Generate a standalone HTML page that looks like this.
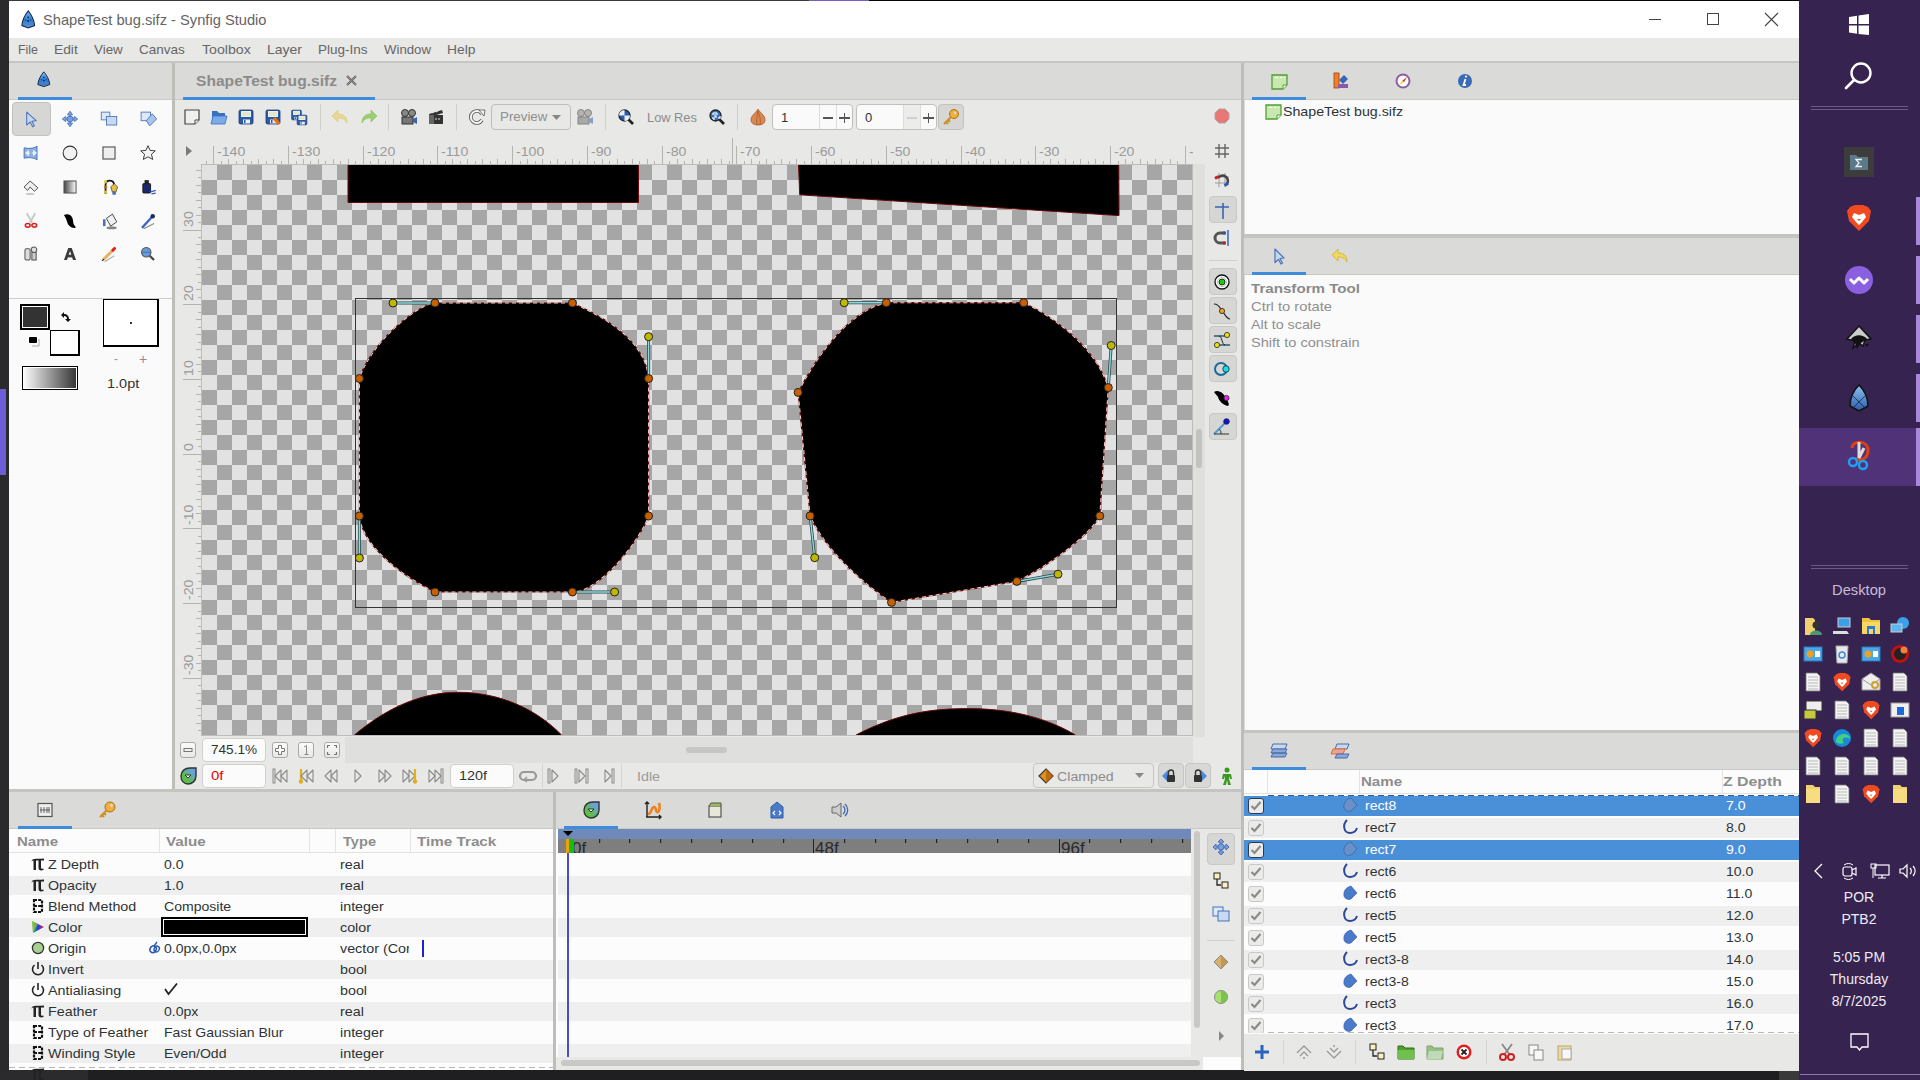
<!DOCTYPE html>
<html><head><meta charset="utf-8">
<style>
*{margin:0;padding:0;box-sizing:border-box}
html,body{width:1920px;height:1080px;overflow:hidden;background:#2a2a2c;font-family:"Liberation Sans",sans-serif;font-size:13px;color:#2e3436}
.a{position:absolute}
.t{position:absolute;white-space:nowrap;line-height:1}
svg{position:absolute;overflow:visible}
</style></head><body>
<div class="a" style="left:9px;top:0px;width:800px;height:1px;background:#3a3a3a;"></div>
<div class="a" style="left:869px;top:0px;width:931px;height:1px;background:#050505;"></div>
<div class="a" style="left:809px;top:0px;width:60px;height:1px;background:#7b5cc4;"></div>
<div class="a" style="left:0px;top:389px;width:6px;height:86px;background:#6c5fd6;"></div>
<div class="a" style="left:0px;top:1070px;width:88px;height:10px;background:#2b2b2d;"></div>
<div class="a" style="left:88px;top:1070px;width:1691px;height:10px;background:#1f1f21;"></div>
<div class="a" style="left:1779px;top:1070px;width:20px;height:10px;background:#3a3a3a;"></div>
<div class="a" style="left:9px;top:1px;width:1790px;height:1069px;background:#e8e8e7;"></div>
<div class="a" style="left:9px;top:1px;width:1790px;height:37px;background:#ffffff;"></div>
<svg style="left:21px;top:10px" width="17" height="20" viewBox="0 0 17 20"><defs><linearGradient id="lg1" x1="0" y1="0" x2="0" y2="1"><stop offset="0" stop-color="#7ab8f0"/><stop offset=".5" stop-color="#2f7fd8"/><stop offset="1" stop-color="#5a8fd0"/></linearGradient></defs>
<g transform="scale(.85 .92)"><path d="M8.5 1 C12 5 15.5 11 16 17 L8.5 19.5 L1 17 C1.5 11 5 5 8.5 1Z" fill="url(#lg1)" stroke="#1a2a40" stroke-width="1.2"/>
<circle cx="8.5" cy="8" r="1" fill="#123"/><circle cx="8.5" cy="12" r="1.1" fill="#123"/><circle cx="5.5" cy="11" r=".7" fill="#123"/><circle cx="11.5" cy="11" r=".7" fill="#123"/></g></svg>
<div class="t" style="left:43.00px;top:12.30px;font-size:15px;color:#646464;transform:scaleX(0.9783);transform-origin:0 0;">ShapeTest bug.sifz - Synfig Studio</div>
<div class="a" style="left:1649px;top:19px;width:12px;height:1px;background:#444;"></div>
<svg style="left:1706px;top:12px" width="14" height="14" viewBox="0 0 14 14"><rect x="1.5" y="1.5" width="11" height="11" fill="none" stroke="#444" stroke-width="1"/></svg>
<svg style="left:1764px;top:12px" width="15" height="15" viewBox="0 0 15 15"><path d="M1 1L14 14M14 1L1 14" stroke="#444" stroke-width="1.1" fill="none"/></svg>
<div class="a" style="left:9px;top:38px;width:1790px;height:23px;background:#e8e8e7;"></div>
<div class="a" style="left:9px;top:61px;width:1790px;height:2px;background:#c6c6c2;"></div>
<div class="t" style="left:17.80px;top:43.00px;font-size:13px;color:#666666;transform:scaleX(0.9547);transform-origin:0 0;">File</div>
<div class="t" style="left:54.25px;top:43.00px;font-size:13px;color:#666666;transform:scaleX(1.0602);transform-origin:0 0;">Edit</div>
<div class="t" style="left:94.25px;top:43.00px;font-size:13px;color:#666666;transform:scaleX(1.0288);transform-origin:0 0;">View</div>
<div class="t" style="left:139.25px;top:43.00px;font-size:13px;color:#666666;transform:scaleX(1.0379);transform-origin:0 0;">Canvas</div>
<div class="t" style="left:202.00px;top:43.00px;font-size:13px;color:#666666;transform:scaleX(1.0879);transform-origin:0 0;">Toolbox</div>
<div class="t" style="left:267.00px;top:43.00px;font-size:13px;color:#666666;transform:scaleX(1.0763);transform-origin:0 0;">Layer</div>
<div class="t" style="left:318.00px;top:43.00px;font-size:13px;color:#666666;transform:scaleX(1.0379);transform-origin:0 0;">Plug-Ins</div>
<div class="t" style="left:384.25px;top:43.00px;font-size:13px;color:#666666;transform:scaleX(1.0165);transform-origin:0 0;">Window</div>
<div class="t" style="left:447.00px;top:43.00px;font-size:13px;color:#666666;transform:scaleX(1.0659);transform-origin:0 0;">Help</div>
<div class="a" style="left:9px;top:63px;width:163px;height:36px;background:#dadad8;"></div>
<div class="a" style="left:9px;top:99px;width:163px;height:1px;background:#c8c8c4;"></div>
<div class="a" style="left:18px;top:97px;width:54px;height:3px;background:#3e8ddd;"></div>
<div class="a" style="left:9px;top:100px;width:163px;height:689px;background:#fafafa;"></div>
<div class="a" style="left:9px;top:298px;width:163px;height:1px;background:#cdcdcb;"></div>
<svg style="left:37px;top:71px" width="14" height="17" viewBox="0 0 14 17"><defs><linearGradient id="lgtb" x1="0" y1="0" x2="0" y2="1"><stop offset="0" stop-color="#8cc4f4"/><stop offset=".5" stop-color="#2f7fd8"/><stop offset="1" stop-color="#4a80c8"/></linearGradient></defs>
<g transform="scale(0.8)"><path d="M8.5 1 C12 5 15.5 11 16 17 L8.5 19.5 L1 17 C1.5 11 5 5 8.5 1Z" fill="url(#lgtb)" stroke="#1a2a40" stroke-width="1.2"/>
<circle cx="8.5" cy="8" r="1" fill="#123"/><circle cx="8.5" cy="12" r="1.1" fill="#123"/><circle cx="5.5" cy="11" r=".7" fill="#123"/><circle cx="11.5" cy="11" r=".7" fill="#123"/></g></svg>
<div class="a" style="left:12px;top:102px;width:39px;height:34px;background:#d6d6d4;border:1px solid #c2c2bf;border-radius:4px;"></div>
<svg style="left:19px;top:107px" width="24" height="24" viewBox="0 0 24 24"><g transform="translate(12 12) scale(.86)"><path d="M-5-8 L6 2 L1 2.5 L4 8 L2 9 L-1 3.5 L-5 7Z" fill="#c8d8f0" stroke="#4a72b8" stroke-width="1.2" stroke-linejoin="round"/></g></svg>
<svg style="left:58px;top:107px" width="24" height="24" viewBox="0 0 24 24"><g transform="translate(12 12) scale(.86)"><path d="M0-9 L3-5 L1-5 L1-1 L5-1 L5-3 L9 0 L5 3 L5 1 L1 1 L1 5 L3 5 L0 9 L-3 5 L-1 5 L-1 1 L-5 1 L-5 3 L-9 0 L-5-3 L-5-1 L-1-1 L-1-5 L-3-5Z" fill="#7aa0d8" stroke="#4a72b8" stroke-width="1"/><circle r="3.5" fill="#7aa0d8" stroke="#4a72b8"/></g></svg>
<svg style="left:97px;top:107px" width="24" height="24" viewBox="0 0 24 24"><g transform="translate(12 12) scale(.86)"><rect x="-9" y="-8" width="10" height="9" fill="#dde8f8" stroke="#4a72b8"/><rect x="-3" y="-3" width="12" height="10" fill="#c8daf2" stroke="#4a72b8"/></g></svg>
<svg style="left:136px;top:107px" width="24" height="24" viewBox="0 0 24 24"><g transform="translate(12 12) scale(.86)"><rect x="-8" y="-8" width="11" height="10" fill="#dde8f8" stroke="#4a72b8"/><path d="M-2 2 L5-6 L10 0 L2 8Z" fill="#a8c4ea" stroke="#4a72b8"/></g></svg>
<svg style="left:19px;top:141px" width="24" height="24" viewBox="0 0 24 24"><g transform="translate(12 12) scale(.86)"><path d="M-8-6 C-3-5 3-5 7-8 V8 C3 5 -3 5 -8 6Z" fill="#8cb0e0" stroke="#4a72b8" stroke-width="1.1"/><path d="M-6 0 L-3-2.5 V2.5Z M-3 0 H-1 M6 0 L3-2.5 V2.5Z M1 0 H3" fill="#e8f0fa" stroke="#e8f0fa" stroke-width="1.2"/></g></svg>
<svg style="left:58px;top:141px" width="24" height="24" viewBox="0 0 24 24"><g transform="translate(12 12) scale(.86)"><circle r="8" fill="#f2f2f2" stroke="#333" stroke-width="1.2"/></g></svg>
<svg style="left:97px;top:141px" width="24" height="24" viewBox="0 0 24 24"><g transform="translate(12 12) scale(.86)"><rect x="-7" y="-7" width="14" height="14" fill="#eee" stroke="#444" stroke-width="1.2"/></g></svg>
<svg style="left:136px;top:141px" width="24" height="24" viewBox="0 0 24 24"><g transform="translate(12 12) scale(.86)"><path d="M0-8.5 L2.5-3 L8.5-2.5 L4 1.5 L5.5 7.5 L0 4.5 L-5.5 7.5 L-4 1.5 L-8.5-2.5 L-2.5-3Z" fill="#f4f4f4" stroke="#333" stroke-width="1.1" stroke-linejoin="round"/></g></svg>
<svg style="left:19px;top:175px" width="24" height="24" viewBox="0 0 24 24"><g transform="translate(12 12) scale(.86)"><path d="M-8 0 L-1-7 L8 1 L4 5 L-1 0 L-4 4Z" fill="#eee" stroke="#333" stroke-width="1" stroke-linejoin="round"/><ellipse cx="-1" cy="8" rx="5" ry="1" fill="#999" opacity=".6"/></g></svg>
<svg style="left:58px;top:175px" width="24" height="24" viewBox="0 0 24 24"><g transform="translate(12 12) scale(.86)"><defs><linearGradient id="gg1"><stop offset="0" stop-color="#444"/><stop offset="1" stop-color="#fff"/></linearGradient></defs><rect x="-7" y="-7" width="14" height="14" fill="url(#gg1)" stroke="#555" stroke-width="1.2"/></g></svg>
<svg style="left:97px;top:175px" width="24" height="24" viewBox="0 0 24 24"><g transform="translate(12 12) scale(.86)"><path d="M-4 8 V-3 C-4-9 6-9 6-2" fill="none" stroke="#111" stroke-width="2"/><circle cx="-4" cy="-6" r="1.8" fill="#cc2"/><circle cx="-4" cy="0" r="1.8" fill="#c60"/><circle cx="-4" cy="6" r="1.8" fill="#cc2"/><path d="M2 0 L6-4 L10 0 L8 6 H4Z" fill="#e8c040" stroke="#333" stroke-width=".8"/><rect x="4" y="5" width="4" height="4" fill="#4a72b8"/></g></svg>
<svg style="left:136px;top:175px" width="24" height="24" viewBox="0 0 24 24"><g transform="translate(12 12) scale(.86)"><rect x="-6" y="-4" width="9" height="11" rx="1" fill="#1a2a6a" stroke="#111"/><rect x="-4" y="-8" width="5" height="4" fill="#222"/><path d="M2 6 L9 4 M4 8 L9 7" stroke="#3060c0" stroke-width="1.5"/></g></svg>
<svg style="left:19px;top:209px" width="24" height="24" viewBox="0 0 24 24"><g transform="translate(12 12) scale(.86)"><path d="M-5-9 L1.5 2 M5-9 L-1.5 2" stroke="#c8c8c8" stroke-width="2.2"/><ellipse cx="-3.8" cy="5" rx="2.8" ry="2.2" fill="none" stroke="#d82020" stroke-width="1.8"/><ellipse cx="3.8" cy="5" rx="2.8" ry="2.2" fill="none" stroke="#d82020" stroke-width="1.8"/></g></svg>
<svg style="left:58px;top:209px" width="24" height="24" viewBox="0 0 24 24"><g transform="translate(12 12) scale(.86)"><path d="M-7-7 C-3-9 2-7 3-3 C4 0 3 3 6 6 C7 7 7 8 5 8 C1 8 -2 5 -3 2 C-4-1 -5-4 -7-7Z" fill="#000"/></g></svg>
<svg style="left:97px;top:209px" width="24" height="24" viewBox="0 0 24 24"><g transform="translate(12 12) scale(.86)"><path d="M-3-3 L4-8 L9 1 L2 6Z" fill="#f0f0f0" stroke="#333"/><rect x="-7" y="-2" width="3" height="8" fill="#4a72b8"/><ellipse cx="3" cy="8" rx="6" ry="1.5" fill="#333" opacity=".6"/></g></svg>
<svg style="left:136px;top:209px" width="24" height="24" viewBox="0 0 24 24"><g transform="translate(12 12) scale(.86)"><path d="M-7 8 L4-4" stroke="#3a64c0" stroke-width="2.6"/><circle cx="5.5" cy="-5.5" r="2.6" fill="#1a2a5a"/><path d="M-5 9 L7 3" stroke="#444" stroke-width="1.4" opacity=".6"/></g></svg>
<svg style="left:19px;top:242px" width="24" height="24" viewBox="0 0 24 24"><g transform="translate(12 12) scale(.86)"><rect x="-7" y="-6" width="6" height="13" rx="1.5" fill="#ddd" stroke="#555" stroke-width="1.2"/><rect x="1" y="-2" width="5" height="9" fill="#ccc" stroke="#555" stroke-width="1.2"/><circle cx="3.5" cy="-5" r="3.2" fill="#ddd" stroke="#555" stroke-width="1.2"/></g></svg>
<svg style="left:58px;top:242px" width="24" height="24" viewBox="0 0 24 24"><g transform="translate(12 12) scale(.86)"><path d="M-7 7 L-2-7 H2 L7 7 H3.5 L2.5 4 H-2.5 L-3.5 7Z M-1.5 1 H1.5 L0-3.5Z" fill="#3a3a3a" fill-rule="evenodd"/><path d="M-2.5 4 H2.5" stroke="#aaa" stroke-width=".8"/></g></svg>
<svg style="left:97px;top:242px" width="24" height="24" viewBox="0 0 24 24"><g transform="translate(12 12) scale(.86)"><path d="M-7 7 L5-5" stroke="#e8b060" stroke-width="3.4"/><path d="M4.5-4.5 L6.5-6.5" stroke="#e02020" stroke-width="3.4" stroke-linecap="round"/><path d="M-8 8 L-6 6" stroke="#333" stroke-width="1.5"/><path d="M-5 9 L6 2" stroke="#666" stroke-width="1.2" opacity=".5"/></g></svg>
<svg style="left:136px;top:242px" width="24" height="24" viewBox="0 0 24 24"><g transform="translate(12 12) scale(.86)"><circle cx="-2" cy="-2" r="5.5" fill="#6a9ad8" stroke="#555" stroke-width="1.2"/><path d="M-7-2 H3" stroke="#3a6ab8" stroke-width="1"/><path d="M2 2 L7 7" stroke="#444" stroke-width="2.6"/></g></svg>
<div class="a" style="left:20px;top:304px;width:30px;height:26px;background:#333;border:2px solid #000;box-shadow:inset 0 0 0 1px #fff;"></div>
<div class="a" style="left:50px;top:330px;width:30px;height:26px;background:#fff;border:1px solid #000;border-right-width:2px;border-bottom-width:2px;"></div>
<svg style="left:58px;top:311px" width="14" height="13" viewBox="0 0 14 13"><path d="M3 4 L6 1 L6 3 C9 3 11 5 11 8 L13 8 L10 11 L7 8 L9 8 C9 6 8 5 6 5 L6 7Z" fill="#111"/></svg>
<svg style="left:28px;top:336px" width="14" height="14" viewBox="0 0 14 14"><rect x="1" y="1" width="8" height="6" rx="1" fill="#000"/><path d="M4 10 H11 V3" fill="none" stroke="#aaa" stroke-width="1"/></svg>
<div class="a" style="left:103px;top:299px;width:56px;height:48px;background:#fff;border:2px solid #000;border-top-width:1px;border-left-width:1px;"></div>
<div class="a" style="left:130px;top:322px;width:2px;height:2px;background:#333;"></div>
<div class="t" style="left:114.00px;top:352.84px;font-size:12px;color:#999;">-</div>
<div class="t" style="left:139.00px;top:352.15px;font-size:14px;color:#998899;">+</div>
<div class="a" style="left:22px;top:366px;width:56px;height:24px;background:linear-gradient(90deg,#fff,#333);border:1px solid #000;box-shadow:inset 0 0 0 1px #fff;"></div>
<div class="t" style="left:106.70px;top:377.00px;font-size:13px;color:#333;transform:scaleX(1.1171);transform-origin:0 0;">1.0pt</div>
<div class="a" style="left:172px;top:63px;width:3px;height:726px;background:#bebeb9;"></div>
<div class="a" style="left:175px;top:63px;width:1066px;height:36px;background:#dadad8;"></div>
<div class="a" style="left:175px;top:99px;width:1066px;height:1px;background:#c8c8c4;"></div>
<div class="a" style="left:183px;top:97px;width:192px;height:3px;background:#3e8ddd;"></div>
<div class="t" style="left:195.60px;top:73.75px;font-size:14px;color:#8b8b8b;font-weight:bold;transform:scaleX(1.1143);transform-origin:0 0;">ShapeTest bug.sifz</div>
<svg style="left:345px;top:74px" width="13" height="13" viewBox="0 0 13 13"><path d="M2 2 L11 11 M11 2 L2 11" stroke="#666" stroke-width="2.2"/><path d="M2 2 L11 11 M11 2 L2 11" stroke="#999" stroke-width=".8"/></svg>
<svg style="left:180px;top:105px" width="24" height="24" viewBox="0 0 24 24"><g transform="translate(12 12)"><path d="M-7-7 H7 V3 L3 7 H-7Z" fill="#f0f0f0" stroke="#444" stroke-width="1.2"/><path d="M7 3 H3 V7" fill="#fff" stroke="#444" stroke-width="1"/></g></svg>
<svg style="left:207px;top:105px" width="24" height="24" viewBox="0 0 24 24"><g transform="translate(12 12)"><path d="M-7-6 H-2 L0-4 H6 V6 H-7Z" fill="#3a70c0"/><path d="M-6-1 H8 L6 7 H-8Z" fill="#7aaae8" stroke="#3a70c0" stroke-width=".8"/></g></svg>
<svg style="left:234px;top:105px" width="24" height="24" viewBox="0 0 24 24"><g transform="translate(12 12)"><rect x="-7" y="-7" width="14" height="14" rx="1.5" fill="#2a5aa8" stroke="#1a3a78" stroke-width=".8"/><rect x="-5" y="-6" width="10" height="6" fill="#eef2e8"/><path d="M-4-4 H4 M-4-2 H4" stroke="#cdd8a8" stroke-width=".8"/><rect x="-3" y="2.5" width="7" height="4" fill="#f0f0f0"/><rect x="-2" y="3" width="1.5" height="3" fill="#2a5aa8"/></g></svg>
<svg style="left:261px;top:105px" width="24" height="24" viewBox="0 0 24 24"><g transform="translate(12 12)"><rect x="-7" y="-7" width="14" height="14" rx="1.5" fill="#2a5aa8" stroke="#1a3a78" stroke-width=".8"/><rect x="-5" y="-6" width="10" height="6" fill="#eef2e8"/><path d="M-4-4 H4 M-4-2 H4" stroke="#cdd8a8" stroke-width=".8"/><rect x="-3" y="2.5" width="7" height="4" fill="#f0f0f0"/><rect x="-2" y="3" width="1.5" height="3" fill="#2a5aa8"/><path d="M1 1 L6 7" stroke="#f07010" stroke-width="3.5"/></g></svg>
<svg style="left:287px;top:105px" width="24" height="24" viewBox="0 0 24 24"><g transform="translate(12 12)"><g transform="translate(-2.5 -2) scale(.7)"><rect x="-7" y="-7" width="14" height="14" rx="1.5" fill="#2a5aa8" stroke="#1a3a78" stroke-width=".8"/><rect x="-5" y="-6" width="10" height="6" fill="#eef2e8"/><path d="M-4-4 H4 M-4-2 H4" stroke="#cdd8a8" stroke-width=".8"/><rect x="-3" y="2.5" width="7" height="4" fill="#f0f0f0"/><rect x="-2" y="3" width="1.5" height="3" fill="#2a5aa8"/></g><g transform="translate(3 3) scale(.7)"><rect x="-7" y="-7" width="14" height="14" rx="1.5" fill="#2a5aa8" stroke="#1a3a78" stroke-width=".8"/><rect x="-5" y="-6" width="10" height="6" fill="#eef2e8"/><path d="M-4-4 H4 M-4-2 H4" stroke="#cdd8a8" stroke-width=".8"/><rect x="-3" y="2.5" width="7" height="4" fill="#f0f0f0"/><rect x="-2" y="3" width="1.5" height="3" fill="#2a5aa8"/></g></g></svg>
<div class="a" style="left:320px;top:104px;width:1px;height:26px;background:#cfcfcc;"></div>
<svg style="left:329px;top:105px" width="24" height="24" viewBox="0 0 24 24"><g transform="translate(12 12)"><path d="M6 6 C6 -1 2-3 -3-3 V-7 L-9-1 L-3 5 V1 C1 1 4 2 6 6Z" fill="#e8d890" stroke="#d8c870" stroke-width=".6"/></g></svg>
<svg style="left:356px;top:105px" width="24" height="24" viewBox="0 0 24 24"><g transform="translate(12 12)"><path d="M-6 6 C-6 -1 -2-3 3-3 V-7 L9-1 L3 5 V1 C-1 1 -4 2 -6 6Z" fill="#98d070" stroke="#88c060" stroke-width=".6"/></g></svg>
<div class="a" style="left:388px;top:104px;width:1px;height:26px;background:#cfcfcc;"></div>
<svg style="left:397px;top:105px" width="24" height="24" viewBox="0 0 24 24"><g transform="translate(12 12)"><circle cx="-4" cy="-4" r="3.5" fill="#888" stroke="#333" stroke-width="1"/><circle cx="3" cy="-4" r="3.5" fill="#888" stroke="#333" stroke-width="1"/><rect x="-7" y="0" width="11" height="7" fill="#777" stroke="#333" stroke-width="1"/><path d="M4 2 L8 0 V7 L4 5Z" fill="#3a64b0"/></g></svg>
<svg style="left:424px;top:105px" width="24" height="24" viewBox="0 0 24 24"><g transform="translate(12 12)"><rect x="-7" y="-2" width="14" height="9" fill="#333"/><path d="M-7-3 L6-7 L7-4 L-6 0Z" fill="#333"/><path d="M-4-4 L-2-5 M0-5 L2-6 M-3 1 V3 M0 1 V3 M3 1 V3" stroke="#ddd" stroke-width="1"/><rect x="-7" y="-2" width="5" height="9" fill="#666"/></g></svg>
<div class="a" style="left:456px;top:104px;width:1px;height:26px;background:#cfcfcc;"></div>
<svg style="left:465px;top:105px" width="24" height="24" viewBox="0 0 24 24"><g transform="translate(12 12)"><path d="M5-3 A6 6 0 1 0 5 3" fill="none" stroke="#555" stroke-width="3.6"/><path d="M5-3 A6 6 0 1 0 5 3" fill="none" stroke="#f4f4f4" stroke-width="2"/><path d="M2-7 L8-7 L7-1Z" fill="#f4f4f4" stroke="#555" stroke-width=".8"/></g></svg>
<div class="a" style="left:491px;top:104px;width:80px;height:26px;background:#e8e8e7;border:1px solid #bdbdba;border-radius:4px;"></div>
<div class="t" style="left:499.60px;top:110.20px;font-size:13px;color:#8f8f8f;transform:scaleX(1.0251);transform-origin:0 0;">Preview</div>
<svg style="left:551px;top:114px" width="11" height="7" viewBox="0 0 11 7"><path d="M1 1 H10 L5.5 6Z" fill="#888"/></svg>
<svg style="left:573px;top:105px" width="24" height="24" viewBox="0 0 24 24"><g transform="translate(12 12)"><g opacity=".55"><circle cx="-4" cy="-4" r="3.5" fill="#888" stroke="#333" stroke-width="1"/><circle cx="3" cy="-4" r="3.5" fill="#888" stroke="#333" stroke-width="1"/><rect x="-7" y="0" width="11" height="7" fill="#777" stroke="#333" stroke-width="1"/><path d="M4 2 L8 0 V7 L4 5Z" fill="#3a64b0"/></g></g></svg>
<div class="a" style="left:605px;top:104px;width:1px;height:26px;background:#cfcfcc;"></div>
<svg style="left:614px;top:105px" width="24" height="24" viewBox="0 0 24 24"><g transform="translate(12 12)"><circle cx="-1.5" cy="-1.5" r="5.5" fill="#2a5aa8" stroke="#222" stroke-width="1.3"/><path d="M2.5 2.5 L7 7" stroke="#222" stroke-width="2.6"/><path d="M-1.5-7 A5.5 5.5 0 0 0 -7-1.5 H-1.5Z M-1.5 4 A5.5 5.5 0 0 0 4-1.5 H-1.5Z" fill="#e8eef8"/></g></svg>
<div class="t" style="left:646.50px;top:110.50px;font-size:13px;color:#8c8c8c;transform:scaleX(0.9866);transform-origin:0 0;">Low Res</div>
<svg style="left:705px;top:105px" width="24" height="24" viewBox="0 0 24 24"><g transform="translate(12 12)"><circle cx="-1.5" cy="-1.5" r="5.5" fill="#3a6ab8" stroke="#222" stroke-width="1.3"/><path d="M2.5 2.5 L7 7" stroke="#222" stroke-width="2.6"/><path d="M-5-3 H-3 V-5 M-1-5 V-3 H1 M-3-1 H-1 V1 M1 1 H3 V-1 M-5 1 H-3 V3" stroke="#dde8f8" stroke-width="1.4" fill="none"/></g></svg>
<div class="a" style="left:737px;top:104px;width:1px;height:26px;background:#cfcfcc;"></div>
<svg style="left:746px;top:105px" width="24" height="24" viewBox="0 0 24 24"><g transform="translate(12 12)"><path d="M0-8 C-2-4 -7-2 -7 3 C-7 7 -3 8 0 8 C3 8 7 7 7 3 C7-2 2-4 0-8Z" fill="#d88850" stroke="#a85a28" stroke-width=".8"/><path d="M0-6 C-1 0 -2 4 -1 8 M0-6 C2 0 3 4 2 8" stroke="#a85a28" stroke-width=".8" fill="none"/></g></svg>
<div class="a" style="left:772px;top:104px;width:81px;height:26px;background:#fafafa;border:1px solid #c0c0bd;border-radius:4px;"></div>
<div class="a" style="left:819px;top:105px;width:1px;height:24px;background:#dcdcda;"></div>
<div class="a" style="left:836px;top:105px;width:1px;height:24px;background:#dcdcda;"></div>
<div class="t" style="left:781.00px;top:110.50px;font-size:13px;color:#2e3436;">1</div>
<div class="a" style="left:823px;top:117px;width:10px;height:1.5px;background:#555;"></div>
<div class="a" style="left:839px;top:117px;width:11px;height:1.5px;background:#555;"></div>
<div class="a" style="left:843.75px;top:112.5px;width:1.5px;height:10.5px;background:#555;"></div>
<div class="a" style="left:856px;top:104px;width:81px;height:26px;background:#fafafa;border:1px solid #c0c0bd;border-radius:4px;"></div>
<div class="a" style="left:903px;top:105px;width:1px;height:24px;background:#dcdcda;"></div>
<div class="a" style="left:920px;top:105px;width:1px;height:24px;background:#dcdcda;"></div>
<div class="a" style="left:904px;top:105px;width:16px;height:24px;background:#ececea;"></div>
<div class="t" style="left:865.00px;top:110.50px;font-size:13px;color:#2e3436;">0</div>
<div class="a" style="left:907px;top:117px;width:10px;height:1.5px;background:#d0d0d0;"></div>
<div class="a" style="left:923px;top:117px;width:11px;height:1.5px;background:#555;"></div>
<div class="a" style="left:927.75px;top:112.5px;width:1.5px;height:10.5px;background:#555;"></div>
<div class="a" style="left:938px;top:104px;width:26px;height:26px;background:#d6d6d4;border:1px solid #c2c2bf;border-radius:4px;"></div>
<svg style="left:939px;top:105px" width="24" height="24" viewBox="0 0 24 24"><g transform="translate(12 12)"><circle cx="3" cy="-3" r="4.5" fill="#f0b040" stroke="#b07010" stroke-width="1"/><circle cx="4" cy="-4" r="1.3" fill="#d6d6d4"/><path d="M0 0 L-7 7 M-5 5 L-3 7 M-3 3 L-1 5" stroke="#d09020" stroke-width="2"/></g></svg>
<svg style="left:1210px;top:104px" width="24" height="24" viewBox="0 0 24 24"><g transform="translate(12 12)"><path d="M-3-7 H3 L7-3 V3 L3 7 H-3 L-7 3 V-3Z" fill="#e87878" stroke="#b8a0a0" stroke-width="1"/></g></svg>
<div class="a" style="left:0;top:0;width:1193px;height:170px;overflow:hidden"><div class="t" style="left:217.00px;top:145.84px;font-size:12px;color:#9a9a9a;transform:scaleX(1.1800);transform-origin:0 0;clip-path:inset(0 0 0 0);">-140</div>
<div class="t" style="left:292.00px;top:145.84px;font-size:12px;color:#9a9a9a;transform:scaleX(1.1800);transform-origin:0 0;clip-path:inset(0 0 0 0);">-130</div>
<div class="t" style="left:367.00px;top:145.84px;font-size:12px;color:#9a9a9a;transform:scaleX(1.1800);transform-origin:0 0;clip-path:inset(0 0 0 0);">-120</div>
<div class="t" style="left:441.00px;top:145.84px;font-size:12px;color:#9a9a9a;transform:scaleX(1.1800);transform-origin:0 0;clip-path:inset(0 0 0 0);">-110</div>
<div class="t" style="left:516.00px;top:145.84px;font-size:12px;color:#9a9a9a;transform:scaleX(1.1800);transform-origin:0 0;clip-path:inset(0 0 0 0);">-100</div>
<div class="t" style="left:591.00px;top:145.84px;font-size:12px;color:#9a9a9a;transform:scaleX(1.1800);transform-origin:0 0;clip-path:inset(0 0 0 0);">-90</div>
<div class="t" style="left:666.00px;top:145.84px;font-size:12px;color:#9a9a9a;transform:scaleX(1.1800);transform-origin:0 0;clip-path:inset(0 0 0 0);">-80</div>
<div class="t" style="left:740.00px;top:145.84px;font-size:12px;color:#9a9a9a;transform:scaleX(1.1800);transform-origin:0 0;clip-path:inset(0 0 0 0);">-70</div>
<div class="t" style="left:815.00px;top:145.84px;font-size:12px;color:#9a9a9a;transform:scaleX(1.1800);transform-origin:0 0;clip-path:inset(0 0 0 0);">-60</div>
<div class="t" style="left:890.00px;top:145.84px;font-size:12px;color:#9a9a9a;transform:scaleX(1.1800);transform-origin:0 0;clip-path:inset(0 0 0 0);">-50</div>
<div class="t" style="left:965.00px;top:145.84px;font-size:12px;color:#9a9a9a;transform:scaleX(1.1800);transform-origin:0 0;clip-path:inset(0 0 0 0);">-40</div>
<div class="t" style="left:1039.00px;top:145.84px;font-size:12px;color:#9a9a9a;transform:scaleX(1.1800);transform-origin:0 0;clip-path:inset(0 0 0 0);">-30</div>
<div class="t" style="left:1114.00px;top:145.84px;font-size:12px;color:#9a9a9a;transform:scaleX(1.1800);transform-origin:0 0;clip-path:inset(0 0 0 0);">-20</div>
<div class="t" style="left:1189.00px;top:145.84px;font-size:12px;color:#9a9a9a;transform:scaleX(1.1800);transform-origin:0 0;clip-path:inset(0 0 0 0);">-10</div>
<svg style="left:0px;top:0px" width="1920" height="1080" viewBox="0 0 1920 1080"><rect x="206" y="161" width="1" height="3" fill="#b4b4b0"/><rect x="213" y="146" width="1" height="18" fill="#b4b4b0"/><rect x="221" y="161" width="1" height="3" fill="#b4b4b0"/><rect x="228" y="159" width="1" height="5" fill="#b4b4b0"/><rect x="236" y="161" width="1" height="3" fill="#b4b4b0"/><rect x="243" y="159" width="1" height="5" fill="#b4b4b0"/><rect x="251" y="161" width="1" height="3" fill="#b4b4b0"/><rect x="258" y="159" width="1" height="5" fill="#b4b4b0"/><rect x="266" y="161" width="1" height="3" fill="#b4b4b0"/><rect x="273" y="159" width="1" height="5" fill="#b4b4b0"/><rect x="281" y="161" width="1" height="3" fill="#b4b4b0"/><rect x="288" y="146" width="1" height="18" fill="#b4b4b0"/><rect x="296" y="161" width="1" height="3" fill="#b4b4b0"/><rect x="303" y="159" width="1" height="5" fill="#b4b4b0"/><rect x="310" y="161" width="1" height="3" fill="#b4b4b0"/><rect x="318" y="159" width="1" height="5" fill="#b4b4b0"/><rect x="325" y="161" width="1" height="3" fill="#b4b4b0"/><rect x="333" y="159" width="1" height="5" fill="#b4b4b0"/><rect x="340" y="161" width="1" height="3" fill="#b4b4b0"/><rect x="348" y="159" width="1" height="5" fill="#b4b4b0"/><rect x="355" y="161" width="1" height="3" fill="#b4b4b0"/><rect x="363" y="146" width="1" height="18" fill="#b4b4b0"/><rect x="370" y="161" width="1" height="3" fill="#b4b4b0"/><rect x="378" y="159" width="1" height="5" fill="#b4b4b0"/><rect x="385" y="161" width="1" height="3" fill="#b4b4b0"/><rect x="393" y="159" width="1" height="5" fill="#b4b4b0"/><rect x="400" y="161" width="1" height="3" fill="#b4b4b0"/><rect x="408" y="159" width="1" height="5" fill="#b4b4b0"/><rect x="415" y="161" width="1" height="3" fill="#b4b4b0"/><rect x="423" y="159" width="1" height="5" fill="#b4b4b0"/><rect x="430" y="161" width="1" height="3" fill="#b4b4b0"/><rect x="437" y="146" width="1" height="18" fill="#b4b4b0"/><rect x="445" y="161" width="1" height="3" fill="#b4b4b0"/><rect x="452" y="159" width="1" height="5" fill="#b4b4b0"/><rect x="460" y="161" width="1" height="3" fill="#b4b4b0"/><rect x="467" y="159" width="1" height="5" fill="#b4b4b0"/><rect x="475" y="161" width="1" height="3" fill="#b4b4b0"/><rect x="482" y="159" width="1" height="5" fill="#b4b4b0"/><rect x="490" y="161" width="1" height="3" fill="#b4b4b0"/><rect x="497" y="159" width="1" height="5" fill="#b4b4b0"/><rect x="505" y="161" width="1" height="3" fill="#b4b4b0"/><rect x="512" y="146" width="1" height="18" fill="#b4b4b0"/><rect x="520" y="161" width="1" height="3" fill="#b4b4b0"/><rect x="527" y="159" width="1" height="5" fill="#b4b4b0"/><rect x="535" y="161" width="1" height="3" fill="#b4b4b0"/><rect x="542" y="159" width="1" height="5" fill="#b4b4b0"/><rect x="550" y="161" width="1" height="3" fill="#b4b4b0"/><rect x="557" y="159" width="1" height="5" fill="#b4b4b0"/><rect x="565" y="161" width="1" height="3" fill="#b4b4b0"/><rect x="572" y="159" width="1" height="5" fill="#b4b4b0"/><rect x="579" y="161" width="1" height="3" fill="#b4b4b0"/><rect x="587" y="146" width="1" height="18" fill="#b4b4b0"/><rect x="594" y="161" width="1" height="3" fill="#b4b4b0"/><rect x="602" y="159" width="1" height="5" fill="#b4b4b0"/><rect x="609" y="161" width="1" height="3" fill="#b4b4b0"/><rect x="617" y="159" width="1" height="5" fill="#b4b4b0"/><rect x="624" y="161" width="1" height="3" fill="#b4b4b0"/><rect x="632" y="159" width="1" height="5" fill="#b4b4b0"/><rect x="639" y="161" width="1" height="3" fill="#b4b4b0"/><rect x="647" y="159" width="1" height="5" fill="#b4b4b0"/><rect x="654" y="161" width="1" height="3" fill="#b4b4b0"/><rect x="662" y="146" width="1" height="18" fill="#b4b4b0"/><rect x="669" y="161" width="1" height="3" fill="#b4b4b0"/><rect x="677" y="159" width="1" height="5" fill="#b4b4b0"/><rect x="684" y="161" width="1" height="3" fill="#b4b4b0"/><rect x="692" y="159" width="1" height="5" fill="#b4b4b0"/><rect x="699" y="161" width="1" height="3" fill="#b4b4b0"/><rect x="707" y="159" width="1" height="5" fill="#b4b4b0"/><rect x="714" y="161" width="1" height="3" fill="#b4b4b0"/><rect x="721" y="159" width="1" height="5" fill="#b4b4b0"/><rect x="729" y="161" width="1" height="3" fill="#b4b4b0"/><rect x="736" y="146" width="1" height="18" fill="#b4b4b0"/><rect x="744" y="161" width="1" height="3" fill="#b4b4b0"/><rect x="751" y="159" width="1" height="5" fill="#b4b4b0"/><rect x="759" y="161" width="1" height="3" fill="#b4b4b0"/><rect x="766" y="159" width="1" height="5" fill="#b4b4b0"/><rect x="774" y="161" width="1" height="3" fill="#b4b4b0"/><rect x="781" y="159" width="1" height="5" fill="#b4b4b0"/><rect x="789" y="161" width="1" height="3" fill="#b4b4b0"/><rect x="796" y="159" width="1" height="5" fill="#b4b4b0"/><rect x="804" y="161" width="1" height="3" fill="#b4b4b0"/><rect x="811" y="146" width="1" height="18" fill="#b4b4b0"/><rect x="819" y="161" width="1" height="3" fill="#b4b4b0"/><rect x="826" y="159" width="1" height="5" fill="#b4b4b0"/><rect x="834" y="161" width="1" height="3" fill="#b4b4b0"/><rect x="841" y="159" width="1" height="5" fill="#b4b4b0"/><rect x="849" y="161" width="1" height="3" fill="#b4b4b0"/><rect x="856" y="159" width="1" height="5" fill="#b4b4b0"/><rect x="863" y="161" width="1" height="3" fill="#b4b4b0"/><rect x="871" y="159" width="1" height="5" fill="#b4b4b0"/><rect x="878" y="161" width="1" height="3" fill="#b4b4b0"/><rect x="886" y="146" width="1" height="18" fill="#b4b4b0"/><rect x="893" y="161" width="1" height="3" fill="#b4b4b0"/><rect x="901" y="159" width="1" height="5" fill="#b4b4b0"/><rect x="908" y="161" width="1" height="3" fill="#b4b4b0"/><rect x="916" y="159" width="1" height="5" fill="#b4b4b0"/><rect x="923" y="161" width="1" height="3" fill="#b4b4b0"/><rect x="931" y="159" width="1" height="5" fill="#b4b4b0"/><rect x="938" y="161" width="1" height="3" fill="#b4b4b0"/><rect x="946" y="159" width="1" height="5" fill="#b4b4b0"/><rect x="953" y="161" width="1" height="3" fill="#b4b4b0"/><rect x="961" y="146" width="1" height="18" fill="#b4b4b0"/><rect x="968" y="161" width="1" height="3" fill="#b4b4b0"/><rect x="976" y="159" width="1" height="5" fill="#b4b4b0"/><rect x="983" y="161" width="1" height="3" fill="#b4b4b0"/><rect x="990" y="159" width="1" height="5" fill="#b4b4b0"/><rect x="998" y="161" width="1" height="3" fill="#b4b4b0"/><rect x="1005" y="159" width="1" height="5" fill="#b4b4b0"/><rect x="1013" y="161" width="1" height="3" fill="#b4b4b0"/><rect x="1020" y="159" width="1" height="5" fill="#b4b4b0"/><rect x="1028" y="161" width="1" height="3" fill="#b4b4b0"/><rect x="1035" y="146" width="1" height="18" fill="#b4b4b0"/><rect x="1043" y="161" width="1" height="3" fill="#b4b4b0"/><rect x="1050" y="159" width="1" height="5" fill="#b4b4b0"/><rect x="1058" y="161" width="1" height="3" fill="#b4b4b0"/><rect x="1065" y="159" width="1" height="5" fill="#b4b4b0"/><rect x="1073" y="161" width="1" height="3" fill="#b4b4b0"/><rect x="1080" y="159" width="1" height="5" fill="#b4b4b0"/><rect x="1088" y="161" width="1" height="3" fill="#b4b4b0"/><rect x="1095" y="159" width="1" height="5" fill="#b4b4b0"/><rect x="1103" y="161" width="1" height="3" fill="#b4b4b0"/><rect x="1110" y="146" width="1" height="18" fill="#b4b4b0"/><rect x="1118" y="161" width="1" height="3" fill="#b4b4b0"/><rect x="1125" y="159" width="1" height="5" fill="#b4b4b0"/><rect x="1132" y="161" width="1" height="3" fill="#b4b4b0"/><rect x="1140" y="159" width="1" height="5" fill="#b4b4b0"/><rect x="1147" y="161" width="1" height="3" fill="#b4b4b0"/><rect x="1155" y="159" width="1" height="5" fill="#b4b4b0"/><rect x="1162" y="161" width="1" height="3" fill="#b4b4b0"/><rect x="1170" y="159" width="1" height="5" fill="#b4b4b0"/><rect x="1177" y="161" width="1" height="3" fill="#b4b4b0"/><rect x="1185" y="146" width="1" height="18" fill="#b4b4b0"/><rect x="732" y="138" width="1" height="26" fill="#b4b4b0"/></svg>
</div>
<div class="t" style="left:183px;top:227px;font-size:12px;color:#9a9a9a;transform:rotate(-90deg) scaleX(1.18);transform-origin:0 0;">30</div>
<div class="t" style="left:183px;top:301px;font-size:12px;color:#9a9a9a;transform:rotate(-90deg) scaleX(1.18);transform-origin:0 0;">20</div>
<div class="t" style="left:183px;top:376px;font-size:12px;color:#9a9a9a;transform:rotate(-90deg) scaleX(1.18);transform-origin:0 0;">10</div>
<div class="t" style="left:183px;top:451px;font-size:12px;color:#9a9a9a;transform:rotate(-90deg) scaleX(1.18);transform-origin:0 0;">0</div>
<div class="t" style="left:183px;top:525px;font-size:12px;color:#9a9a9a;transform:rotate(-90deg) scaleX(1.18);transform-origin:0 0;">-10</div>
<div class="t" style="left:183px;top:600px;font-size:12px;color:#9a9a9a;transform:rotate(-90deg) scaleX(1.18);transform-origin:0 0;">-20</div>
<div class="t" style="left:183px;top:675px;font-size:12px;color:#9a9a9a;transform:rotate(-90deg) scaleX(1.18);transform-origin:0 0;">-30</div>
<svg style="left:0px;top:0px" width="1920" height="1080" viewBox="0 0 1920 1080"><rect x="196" y="170" width="5" height="1" fill="#b4b4b0"/><rect x="198" y="177" width="3" height="1" fill="#b4b4b0"/><rect x="196" y="185" width="5" height="1" fill="#b4b4b0"/><rect x="198" y="192" width="3" height="1" fill="#b4b4b0"/><rect x="196" y="200" width="5" height="1" fill="#b4b4b0"/><rect x="198" y="207" width="3" height="1" fill="#b4b4b0"/><rect x="196" y="215" width="5" height="1" fill="#b4b4b0"/><rect x="198" y="222" width="3" height="1" fill="#b4b4b0"/><rect x="183" y="230" width="18" height="1" fill="#b4b4b0"/><rect x="198" y="237" width="3" height="1" fill="#b4b4b0"/><rect x="196" y="244" width="5" height="1" fill="#b4b4b0"/><rect x="198" y="252" width="3" height="1" fill="#b4b4b0"/><rect x="196" y="259" width="5" height="1" fill="#b4b4b0"/><rect x="198" y="267" width="3" height="1" fill="#b4b4b0"/><rect x="196" y="274" width="5" height="1" fill="#b4b4b0"/><rect x="198" y="282" width="3" height="1" fill="#b4b4b0"/><rect x="196" y="289" width="5" height="1" fill="#b4b4b0"/><rect x="198" y="297" width="3" height="1" fill="#b4b4b0"/><rect x="183" y="304" width="18" height="1" fill="#b4b4b0"/><rect x="198" y="312" width="3" height="1" fill="#b4b4b0"/><rect x="196" y="319" width="5" height="1" fill="#b4b4b0"/><rect x="198" y="327" width="3" height="1" fill="#b4b4b0"/><rect x="196" y="334" width="5" height="1" fill="#b4b4b0"/><rect x="198" y="342" width="3" height="1" fill="#b4b4b0"/><rect x="196" y="349" width="5" height="1" fill="#b4b4b0"/><rect x="198" y="357" width="3" height="1" fill="#b4b4b0"/><rect x="196" y="364" width="5" height="1" fill="#b4b4b0"/><rect x="198" y="371" width="3" height="1" fill="#b4b4b0"/><rect x="183" y="379" width="18" height="1" fill="#b4b4b0"/><rect x="198" y="386" width="3" height="1" fill="#b4b4b0"/><rect x="196" y="394" width="5" height="1" fill="#b4b4b0"/><rect x="198" y="401" width="3" height="1" fill="#b4b4b0"/><rect x="196" y="409" width="5" height="1" fill="#b4b4b0"/><rect x="198" y="416" width="3" height="1" fill="#b4b4b0"/><rect x="196" y="424" width="5" height="1" fill="#b4b4b0"/><rect x="198" y="431" width="3" height="1" fill="#b4b4b0"/><rect x="196" y="439" width="5" height="1" fill="#b4b4b0"/><rect x="198" y="446" width="3" height="1" fill="#b4b4b0"/><rect x="183" y="454" width="18" height="1" fill="#b4b4b0"/><rect x="198" y="461" width="3" height="1" fill="#b4b4b0"/><rect x="196" y="469" width="5" height="1" fill="#b4b4b0"/><rect x="198" y="476" width="3" height="1" fill="#b4b4b0"/><rect x="196" y="484" width="5" height="1" fill="#b4b4b0"/><rect x="198" y="491" width="3" height="1" fill="#b4b4b0"/><rect x="196" y="499" width="5" height="1" fill="#b4b4b0"/><rect x="198" y="506" width="3" height="1" fill="#b4b4b0"/><rect x="196" y="513" width="5" height="1" fill="#b4b4b0"/><rect x="198" y="521" width="3" height="1" fill="#b4b4b0"/><rect x="183" y="528" width="18" height="1" fill="#b4b4b0"/><rect x="198" y="536" width="3" height="1" fill="#b4b4b0"/><rect x="196" y="543" width="5" height="1" fill="#b4b4b0"/><rect x="198" y="551" width="3" height="1" fill="#b4b4b0"/><rect x="196" y="558" width="5" height="1" fill="#b4b4b0"/><rect x="198" y="566" width="3" height="1" fill="#b4b4b0"/><rect x="196" y="573" width="5" height="1" fill="#b4b4b0"/><rect x="198" y="581" width="3" height="1" fill="#b4b4b0"/><rect x="196" y="588" width="5" height="1" fill="#b4b4b0"/><rect x="198" y="596" width="3" height="1" fill="#b4b4b0"/><rect x="183" y="603" width="18" height="1" fill="#b4b4b0"/><rect x="198" y="611" width="3" height="1" fill="#b4b4b0"/><rect x="196" y="618" width="5" height="1" fill="#b4b4b0"/><rect x="198" y="626" width="3" height="1" fill="#b4b4b0"/><rect x="196" y="633" width="5" height="1" fill="#b4b4b0"/><rect x="198" y="641" width="3" height="1" fill="#b4b4b0"/><rect x="196" y="648" width="5" height="1" fill="#b4b4b0"/><rect x="198" y="655" width="3" height="1" fill="#b4b4b0"/><rect x="196" y="663" width="5" height="1" fill="#b4b4b0"/><rect x="198" y="670" width="3" height="1" fill="#b4b4b0"/><rect x="183" y="678" width="18" height="1" fill="#b4b4b0"/><rect x="198" y="685" width="3" height="1" fill="#b4b4b0"/><rect x="196" y="693" width="5" height="1" fill="#b4b4b0"/><rect x="198" y="700" width="3" height="1" fill="#b4b4b0"/><rect x="196" y="708" width="5" height="1" fill="#b4b4b0"/><rect x="198" y="715" width="3" height="1" fill="#b4b4b0"/><rect x="196" y="723" width="5" height="1" fill="#b4b4b0"/><rect x="198" y="730" width="3" height="1" fill="#b4b4b0"/></svg>
<svg style="left:184px;top:144px" width="10" height="14" viewBox="0 0 10 14"><path d="M2 2 L8 7 L2 12Z" fill="#7a7a7a"/></svg>
<div class="a" style="left:201px;top:164px;width:992px;height:572px;background:#bdbdb9;"></div>
<div class="a" style="left:202px;top:165px;width:990px;height:570px;overflow:hidden;background:repeating-conic-gradient(#a6a6a6 0 25%,#e2e2e2 0 50%) 0 0/30px 30px"><svg style="left:-202px;top:-165px" width="1920" height="1080" viewBox="0 0 1920 1080"><path d="M348 150 H638.5 V202.5 H348Z" fill="#000" stroke="#6a0808" stroke-width="1"/><path d="M798 150 L799.7 194.8 L1119 215.6 L1118.7 150Z" fill="#000" stroke="#6a0808" stroke-width="1"/><path d="M354.4 735 C390 705 425 692.3 458 692.3 C491 692.3 530 703 561.6 735 V760 H354.4Z" fill="#000" stroke="#6a0808" stroke-width="1"/><path d="M856 735 C900 712 935 708.6 968 708.6 C1001 708.6 1040 714 1075.5 735 V760 H856Z" fill="#000" stroke="#6a0808" stroke-width="1"/><path d="M435 303 L572.4 303 C592 312 645 335 648.6 378.5 L648.6 516 C640 540 600 592 572.4 592 L435 592 C400 575 362 545 359.4 516 L359.4 378.5 C370 345 415 305 435 303Z" fill="#000" stroke="#6a0808" stroke-width="1.2"/><path d="M435 303 L572.4 303 C592 312 645 335 648.6 378.5 L648.6 516 C640 540 600 592 572.4 592 L435 592 C400 575 362 545 359.4 516 L359.4 378.5 C370 345 415 305 435 303Z" fill="none" stroke="#fff" stroke-opacity=".8" stroke-width="1.1" stroke-dasharray="4 3"/><path d="M886.3 302.7 L1023.7 302.7 C1050 315 1095 345 1108.3 387.6 L1099.8 515.9 C1090 535 1050 565 1016.9 581.4 L891.5 602.4 C865 585 825 550 810.1 515.9 L798.1 392.4 C812 365 845 312 886.3 302.7Z" fill="#000" stroke="#6a0808" stroke-width="1.2"/><path d="M886.3 302.7 L1023.7 302.7 C1050 315 1095 345 1108.3 387.6 L1099.8 515.9 C1090 535 1050 565 1016.9 581.4 L891.5 602.4 C865 585 825 550 810.1 515.9 L798.1 392.4 C812 365 845 312 886.3 302.7Z" fill="none" stroke="#fff" stroke-opacity=".8" stroke-width="1.1" stroke-dasharray="4 3"/><rect x="355.5" y="298.5" width="761" height="309" fill="none" stroke="#333" stroke-width="1"/><path d="M435 303 L393 303" stroke="#2a4a4a" stroke-width="3"/><path d="M435 303 L393 303" stroke="#90d8e0" stroke-width="1.4"/><path d="M648.6 378.5 L648.6 336.7" stroke="#2a4a4a" stroke-width="3"/><path d="M648.6 378.5 L648.6 336.7" stroke="#90d8e0" stroke-width="1.4"/><path d="M359.4 516 L359.4 558" stroke="#2a4a4a" stroke-width="3"/><path d="M359.4 516 L359.4 558" stroke="#90d8e0" stroke-width="1.4"/><path d="M572.4 592 L614.6 592" stroke="#2a4a4a" stroke-width="3"/><path d="M572.4 592 L614.6 592" stroke="#90d8e0" stroke-width="1.4"/><path d="M886.3 302.7 L844.2 302.7" stroke="#2a4a4a" stroke-width="3"/><path d="M886.3 302.7 L844.2 302.7" stroke="#90d8e0" stroke-width="1.4"/><path d="M1108.3 387.6 L1111.2 345.5" stroke="#2a4a4a" stroke-width="3"/><path d="M1108.3 387.6 L1111.2 345.5" stroke="#90d8e0" stroke-width="1.4"/><path d="M1016.9 581.4 L1058 574.2" stroke="#2a4a4a" stroke-width="3"/><path d="M1016.9 581.4 L1058 574.2" stroke="#90d8e0" stroke-width="1.4"/><path d="M810.1 515.9 L814.7 557.7" stroke="#2a4a4a" stroke-width="3"/><path d="M810.1 515.9 L814.7 557.7" stroke="#90d8e0" stroke-width="1.4"/><circle cx="393" cy="303" r="4" fill="#c0b800" stroke="#222" stroke-width="1"/><circle cx="648.6" cy="336.7" r="4" fill="#c0b800" stroke="#222" stroke-width="1"/><circle cx="359.4" cy="558" r="4" fill="#c0b800" stroke="#222" stroke-width="1"/><circle cx="614.6" cy="592" r="4" fill="#c0b800" stroke="#222" stroke-width="1"/><circle cx="844.2" cy="302.7" r="4" fill="#c0b800" stroke="#222" stroke-width="1"/><circle cx="1111.2" cy="345.5" r="4" fill="#c0b800" stroke="#222" stroke-width="1"/><circle cx="1058" cy="574.2" r="4" fill="#c0b800" stroke="#222" stroke-width="1"/><circle cx="814.7" cy="557.7" r="4" fill="#c0b800" stroke="#222" stroke-width="1"/><circle cx="435" cy="303" r="4" fill="#c86000" stroke="#222" stroke-width="1"/><circle cx="572.4" cy="303" r="4" fill="#c86000" stroke="#222" stroke-width="1"/><circle cx="648.6" cy="378.5" r="4" fill="#c86000" stroke="#222" stroke-width="1"/><circle cx="648.6" cy="516" r="4" fill="#c86000" stroke="#222" stroke-width="1"/><circle cx="572.4" cy="592" r="4" fill="#c86000" stroke="#222" stroke-width="1"/><circle cx="435" cy="592" r="4" fill="#c86000" stroke="#222" stroke-width="1"/><circle cx="359.4" cy="516" r="4" fill="#c86000" stroke="#222" stroke-width="1"/><circle cx="359.4" cy="378.5" r="4" fill="#c86000" stroke="#222" stroke-width="1"/><circle cx="886.3" cy="302.7" r="4" fill="#c86000" stroke="#222" stroke-width="1"/><circle cx="1023.7" cy="302.7" r="4" fill="#c86000" stroke="#222" stroke-width="1"/><circle cx="1108.3" cy="387.6" r="4" fill="#c86000" stroke="#222" stroke-width="1"/><circle cx="1099.8" cy="515.9" r="4" fill="#c86000" stroke="#222" stroke-width="1"/><circle cx="1016.9" cy="581.4" r="4" fill="#c86000" stroke="#222" stroke-width="1"/><circle cx="891.5" cy="602.4" r="4" fill="#c86000" stroke="#222" stroke-width="1"/><circle cx="810.1" cy="515.9" r="4" fill="#c86000" stroke="#222" stroke-width="1"/><circle cx="798.1" cy="392.4" r="4" fill="#c86000" stroke="#222" stroke-width="1"/></svg></div>
<div class="a" style="left:1193px;top:134px;width:15px;height:30px;background:#e8e8e7;"></div>
<div class="a" style="left:1193px;top:164px;width:12px;height:573px;background:#dfdfdd;"></div>
<div class="a" style="left:1196px;top:429px;width:6px;height:39px;background:#c2c2c0;border-radius:3px;"></div>
<svg style="left:1210px;top:139px" width="24" height="24" viewBox="0 0 24 24"><g transform="translate(12 12)"><path d="M-3-7 V7 M3-7 V7 M-7-3 H7 M-7 3 H7" stroke="#666" stroke-width="1.4"/></g></svg>
<svg style="left:1210px;top:168px" width="24" height="24" viewBox="0 0 24 24"><g transform="translate(12 12)"><path d="M-3-7 V7 M3-7 V7 M-7-3 H7 M-7 3 H7" stroke="#999" stroke-width="1"/><path d="M-4-2 A5 5 0 1 1 5 4" fill="none" stroke="#444" stroke-width="2.5"/><rect x="-7" y="-4" width="4" height="3" fill="#d02020" transform="rotate(-30 -5 -2)"/><rect x="2" y="3" width="4" height="3" fill="#2a5ab8" transform="rotate(-30 4 4)"/></g></svg>
<div class="a" style="left:1209px;top:196px;width:28px;height:27px;background:#d6d6d4;border:1px solid #c8c8c5;border-radius:4px;"></div>
<svg style="left:1210px;top:198px" width="24" height="24" viewBox="0 0 24 24"><g transform="translate(12 12)"><path d="M-7-3 H7 M1-7 V9" stroke="#3a64b0" stroke-width="1.6"/></g></svg>
<svg style="left:1210px;top:226px" width="24" height="24" viewBox="0 0 24 24"><g transform="translate(12 12)"><path d="M3-5 H-2 A5 5 0 0 0 -2 5 H3" fill="none" stroke="#555" stroke-width="3"/><rect x="1" y="-6.5" width="3" height="3" fill="#2a5ab8"/><rect x="1" y="3.5" width="3" height="3" fill="#d02020"/><path d="M6-8 V8" stroke="#2a5ab8" stroke-width="1.4"/></g></svg>
<div class="a" style="left:1209px;top:260px;width:28px;height:1px;background:#d0d0cd;"></div>
<div class="a" style="left:1209px;top:268px;width:28px;height:27px;background:#d6d6d4;border:1px solid #c8c8c5;border-radius:4px;"></div>
<div class="a" style="left:1209px;top:297px;width:28px;height:27px;background:#d6d6d4;border:1px solid #c8c8c5;border-radius:4px;"></div>
<div class="a" style="left:1209px;top:326px;width:28px;height:27px;background:#d6d6d4;border:1px solid #c8c8c5;border-radius:4px;"></div>
<div class="a" style="left:1209px;top:355px;width:28px;height:27px;background:#d6d6d4;border:1px solid #c8c8c5;border-radius:4px;"></div>
<div class="a" style="left:1209px;top:413px;width:28px;height:27px;background:#d6d6d4;border:1px solid #c8c8c5;border-radius:4px;"></div>
<svg style="left:1210px;top:270px" width="24" height="24" viewBox="0 0 24 24"><g transform="translate(12 12)"><circle r="7" fill="#fff" stroke="#111" stroke-width="1.3"/><circle r="4.5" fill="none" stroke="#bbb" stroke-width="1"/><circle r="3" fill="#10d010" stroke="#111" stroke-width=".8"/></g></svg>
<svg style="left:1210px;top:299px" width="24" height="24" viewBox="0 0 24 24"><g transform="translate(12 12)"><path d="M-8-7 C-2-7 -1 0 0 0 C2 1 4 8 8 8" fill="none" stroke="#222" stroke-width="1.1"/><circle cx="0" cy="0" r="2.6" fill="#f0a020" stroke="#222" stroke-width=".8"/></g></svg>
<svg style="left:1210px;top:328px" width="24" height="24" viewBox="0 0 24 24"><g transform="translate(12 12)"><path d="M-8-4 H4 M-4 5 H8" stroke="#2a5a7a" stroke-width="1.5"/><path d="M-3-4 C0-4 0 5 3 5" fill="none" stroke="#222" stroke-width="1"/><circle cx="5" cy="-5" r="2.6" fill="#f0e010" stroke="#222" stroke-width=".8"/><circle cx="-5" cy="5" r="2.6" fill="#f0e010" stroke="#222" stroke-width=".8"/></g></svg>
<svg style="left:1210px;top:357px" width="24" height="24" viewBox="0 0 24 24"><g transform="translate(12 12)"><circle cx="-1" cy="0" r="6" fill="none" stroke="#1a6a9a" stroke-width="2"/><circle cx="4" cy="0" r="3.2" fill="#10e0f0" stroke="#222" stroke-width=".8"/></g></svg>
<svg style="left:1210px;top:386px" width="24" height="24" viewBox="0 0 24 24"><g transform="translate(12 12)"><path d="M-8-6 C-3-9 2-4 4 0 C6 4 8 6 6 8 C1 7 -3 3 -4 -1 C-5-3 -7-4 -8-6Z" fill="#000"/><circle cx="4.5" cy="0" r="2.6" fill="#f020f0" stroke="#222" stroke-width=".8"/></g></svg>
<svg style="left:1210px;top:415px" width="24" height="24" viewBox="0 0 24 24"><g transform="translate(12 12)"><path d="M-8 7 L4-5" stroke="#5a9ad0" stroke-width="2.2"/><path d="M-8 7 H7 M-1 7 A5 5 0 0 0 -3 2" fill="none" stroke="#333" stroke-width="1"/><circle cx="4.5" cy="-5.5" r="2.8" fill="#1010e0" stroke="#222" stroke-width=".8"/></g></svg>
<div class="a" style="left:345px;top:737px;width:848px;height:26px;background:#dfdfdd;"></div>
<div class="a" style="left:686px;top:747px;width:41px;height:6px;background:#c6c6c4;border-radius:3px;"></div>
<div class="a" style="left:180px;top:742px;width:16px;height:16px;background:linear-gradient(#fbfbfb,#e8e8e6);border:1px solid #a9a9a6;border-radius:3px;"></div>
<svg style="left:180px;top:742px" width="16" height="16" viewBox="0 0 16 16"><rect x="4" y="6.5" width="8" height="3" fill="none" stroke="#777" stroke-width="1"/></svg>
<div class="a" style="left:202px;top:738px;width:64px;height:24px;background:#fbfbfb;border:1px solid #d0d0cd;border-radius:4px;"></div>
<div class="t" style="left:210.70px;top:743.00px;font-size:13px;color:#2e3436;transform:scaleX(1.0433);transform-origin:0 0;">745.1%</div>
<div class="a" style="left:272px;top:742px;width:16px;height:16px;background:linear-gradient(#fbfbfb,#e8e8e6);border:1px solid #a9a9a6;border-radius:3px;"></div>
<svg style="left:272px;top:742px" width="16" height="16" viewBox="0 0 16 16"><path d="M6.5 3.5 H9.5 V6.5 H12.5 V9.5 H9.5 V12.5 H6.5 V9.5 H3.5 V6.5 H6.5Z" fill="#fff" stroke="#777" stroke-width="1"/></svg>
<div class="a" style="left:298px;top:742px;width:16px;height:16px;background:linear-gradient(#fbfbfb,#e8e8e6);border:1px solid #a9a9a6;border-radius:3px;"></div>
<svg style="left:298px;top:742px" width="16" height="16" viewBox="0 0 16 16"><path d="M6 5 L8.5 3.5 V12.5 M6.5 12.5 H10.5" fill="none" stroke="#888" stroke-width="1"/></svg>
<div class="a" style="left:324px;top:742px;width:16px;height:16px;background:linear-gradient(#fbfbfb,#e8e8e6);border:1px solid #a9a9a6;border-radius:3px;"></div>
<svg style="left:324px;top:742px" width="16" height="16" viewBox="0 0 16 16"><path d="M3.5 6 V3.5 H6 M10 3.5 H12.5 V6 M12.5 10 V12.5 H10 M6 12.5 H3.5 V10" fill="none" stroke="#777" stroke-width="1.2"/></svg>
<svg style="left:176px;top:764px" width="24" height="24" viewBox="0 0 24 24"><g transform="translate(12 12)"><defs><linearGradient id="amg" x1="0" y1="1" x2="1" y2="0"><stop offset=".3" stop-color="#5ac040"/><stop offset=".8" stop-color="#6aa0e0"/></linearGradient></defs><path d="M-7 0 C-7-5 -3-8 2-8 H8 V0 C8 5 4 8 0 8 C-4 8 -7 5 -7 0Z" fill="url(#amg)" stroke="#333" stroke-width="1.4"/><path d="M-3-1 H3 L0 2Z" fill="#fff" stroke="#333" stroke-width="1"/></g></svg>
<div class="a" style="left:202px;top:764px;width:64px;height:24px;background:#fbfbfb;border:1px solid #d0d0cd;border-radius:4px;"></div>
<div class="t" style="left:210.50px;top:768.50px;font-size:13px;color:#e00000;transform:scaleX(1.1529);transform-origin:0 0;">0f</div>
<svg style="left:268px;top:764px" width="24" height="24" viewBox="0 0 24 24"><g transform="translate(12 12)"><rect x="-7" y="-7" width="2" height="14" fill="none" stroke="#8a8a8a" stroke-width="1"/><path d="M1 -6 L-5 0 L1 6Z" fill="none" stroke="#8a8a8a" stroke-width="1.1" stroke-linejoin="round"/><path d="M7 -6 L1 0 L7 6Z" fill="none" stroke="#8a8a8a" stroke-width="1.1" stroke-linejoin="round"/></g></svg>
<svg style="left:294px;top:764px" width="24" height="24" viewBox="0 0 24 24"><g transform="translate(12 12)"><path d="M-5 -7 V5" stroke="#e0b020" stroke-width="2.2"/><circle cx="-5" cy="5.5" r="2.2" fill="#e0b020"/><path d="M1 -6 L-5 0 L1 6Z" fill="none" stroke="#8a8a8a" stroke-width="1.1" stroke-linejoin="round"/><path d="M7 -6 L1 0 L7 6Z" fill="none" stroke="#8a8a8a" stroke-width="1.1" stroke-linejoin="round"/></g></svg>
<svg style="left:320px;top:764px" width="24" height="24" viewBox="0 0 24 24"><g transform="translate(12 12)"><path d="M-1 -6 L-7 0 L-1 6Z" fill="none" stroke="#8a8a8a" stroke-width="1.1" stroke-linejoin="round"/><path d="M5 -6 L-1 0 L5 6Z" fill="none" stroke="#8a8a8a" stroke-width="1.1" stroke-linejoin="round"/></g></svg>
<svg style="left:346px;top:764px" width="24" height="24" viewBox="0 0 24 24"><g transform="translate(12 12)"><path d="M-3 -6 L3 0 L-3 6Z" fill="none" stroke="#8a8a8a" stroke-width="1.1" stroke-linejoin="round"/></g></svg>
<svg style="left:372px;top:764px" width="24" height="24" viewBox="0 0 24 24"><g transform="translate(12 12)"><path d="M-5 -6 L1 0 L-5 6Z" fill="none" stroke="#8a8a8a" stroke-width="1.1" stroke-linejoin="round"/><path d="M1 -6 L7 0 L1 6Z" fill="none" stroke="#8a8a8a" stroke-width="1.1" stroke-linejoin="round"/></g></svg>
<svg style="left:398px;top:764px" width="24" height="24" viewBox="0 0 24 24"><g transform="translate(12 12)"><path d="M-7 -6 L-1 0 L-7 6Z" fill="none" stroke="#8a8a8a" stroke-width="1.1" stroke-linejoin="round"/><path d="M-1 -6 L5 0 L-1 6Z" fill="none" stroke="#8a8a8a" stroke-width="1.1" stroke-linejoin="round"/><path d="M5 -7 V5" stroke="#e0b020" stroke-width="2.2"/><circle cx="5" cy="5.5" r="2.2" fill="#e0b020"/></g></svg>
<svg style="left:424px;top:764px" width="24" height="24" viewBox="0 0 24 24"><g transform="translate(12 12)"><path d="M-7 -6 L-1 0 L-7 6Z" fill="none" stroke="#8a8a8a" stroke-width="1.1" stroke-linejoin="round"/><path d="M-1 -6 L5 0 L-1 6Z" fill="none" stroke="#8a8a8a" stroke-width="1.1" stroke-linejoin="round"/><rect x="5" y="-7" width="2" height="14" fill="none" stroke="#8a8a8a" stroke-width="1"/></g></svg>
<div class="a" style="left:450px;top:764px;width:64px;height:24px;background:#fbfbfb;border:1px solid #d0d0cd;border-radius:4px;"></div>
<div class="t" style="left:458.50px;top:768.50px;font-size:13px;color:#2e3436;transform:scaleX(1.1066);transform-origin:0 0;">120f</div>
<svg style="left:516px;top:764px" width="24" height="24" viewBox="0 0 24 24"><g transform="translate(12 12)"><path d="M-4 4 H4 A4 4 0 0 0 4-4 H-4 A4 4 0 0 0 -4 4" fill="none" stroke="#999" stroke-width="2.2"/><path d="M-1 1 L-4 4 L-1 6" fill="none" stroke="#999" stroke-width="1.5"/></g></svg>
<div class="a" style="left:542px;top:764px;width:1px;height:24px;background:#d4d4d1;"></div>
<svg style="left:541px;top:764px" width="24" height="24" viewBox="0 0 24 24"><g transform="translate(12 12)"><rect x="-5" y="-7" width="2" height="14" fill="none" stroke="#8a8a8a" stroke-width="1"/><path d="M-1 -6 L5 0 L-1 6Z" fill="none" stroke="#8a8a8a" stroke-width="1.1" stroke-linejoin="round"/></g></svg>
<svg style="left:570px;top:764px" width="24" height="24" viewBox="0 0 24 24"><g transform="translate(12 12)"><rect x="-7" y="-7" width="2" height="14" fill="none" stroke="#8a8a8a" stroke-width="1"/><path d="M-3 -6 L3 0 L-3 6Z" fill="none" stroke="#8a8a8a" stroke-width="1.1" stroke-linejoin="round"/><rect x="4" y="-7" width="2" height="14" fill="none" stroke="#8a8a8a" stroke-width="1"/></g></svg>
<svg style="left:598px;top:764px" width="24" height="24" viewBox="0 0 24 24"><g transform="translate(12 12)"><path d="M-5 -6 L1 0 L-5 6Z" fill="none" stroke="#8a8a8a" stroke-width="1.1" stroke-linejoin="round"/><rect x="2" y="-7" width="2" height="14" fill="none" stroke="#8a8a8a" stroke-width="1"/></g></svg>
<div class="a" style="left:621px;top:764px;width:1px;height:24px;background:#d4d4d1;"></div>
<div class="t" style="left:636.50px;top:769.50px;font-size:13px;color:#9a9a9a;transform:scaleX(1.0973);transform-origin:0 0;">Idle</div>
<div class="a" style="left:1033px;top:763px;width:121px;height:25px;background:#e8e8e7;border:1px solid #c6c6c3;border-radius:4px;"></div>
<svg style="left:1034px;top:764px" width="24" height="24" viewBox="0 0 24 24"><g transform="translate(12 12)"><path d="M0-7 L7 0 L0 7 L-7 0Z" fill="#e09020" stroke="#333" stroke-width="1.2"/><path d="M0-7 L7 0 L0 7Z" fill="#c06a10"/></g></svg>
<div class="t" style="left:1056.80px;top:769.50px;font-size:13px;color:#8c8c8c;transform:scaleX(1.0898);transform-origin:0 0;">Clamped</div>
<svg style="left:1134px;top:772px" width="11" height="7" viewBox="0 0 11 7"><path d="M1 1 H10 L5.5 6Z" fill="#888"/></svg>
<div class="a" style="left:1158px;top:763px;width:26px;height:25px;background:#d8d8d6;border:1px solid #c6c6c3;border-radius:4px;"></div>
<div class="a" style="left:1185px;top:763px;width:26px;height:25px;background:#d8d8d6;border:1px solid #c6c6c3;border-radius:4px;"></div>
<svg style="left:1159px;top:764px" width="24" height="24" viewBox="0 0 24 24"><g transform="translate(12 12)"><path d="M-9 0 L-3-6 V6Z " fill="#4a8ad8"/><rect x="-4" y="-1" width="8" height="7" rx="1" fill="#333"/><path d="M-2.5-1 V-3.5 A2.5 2.5 0 0 1 2.5-3.5 V-1" fill="none" stroke="#333" stroke-width="1.4"/></g></svg>
<svg style="left:1186px;top:764px" width="24" height="24" viewBox="0 0 24 24"><g transform="translate(12 12)"><path d="M9 0 L3-6 V6Z" fill="#4a8ad8"/><rect x="-4" y="-1" width="8" height="7" rx="1" fill="#333"/><path d="M-2.5-1 V-3.5 A2.5 2.5 0 0 1 2.5-3.5 V-1" fill="none" stroke="#333" stroke-width="1.4"/></g></svg>
<svg style="left:1215px;top:764px" width="24" height="24" viewBox="0 0 24 24"><g transform="translate(12 12)"><circle cx="0" cy="-6" r="2.5" fill="#3a9a20"/><path d="M-4-2 H4 L5 3 H3 L2 0 V3 L4 9 H1 L0 4 L-1 9 H-4 L-2 3 V0 L-3 3 H-5Z" fill="#3a9a20"/></g></svg>
<div class="a" style="left:9px;top:789px;width:1232px;height:3px;background:#c4c4c0;"></div>
<div class="a" style="left:9px;top:792px;width:544px;height:36px;background:#dadad8;"></div>
<div class="a" style="left:9px;top:828px;width:544px;height:1px;background:#c8c8c4;"></div>
<div class="a" style="left:18px;top:826px;width:54px;height:3px;background:#3e8ddd;"></div>
<svg style="left:33px;top:798px" width="24" height="24" viewBox="0 0 24 24"><g transform="translate(12 12)"><rect x="-7" y="-6.5" width="14" height="13" fill="#eee" stroke="#555" stroke-width="1.2"/><path d="M-4-3 V3 M-1-3 V3 M2-3 V3 M4-3 V3 M-5 0 H5" stroke="#555" stroke-width=".9"/></g></svg>
<svg style="left:95px;top:798px" width="24" height="24" viewBox="0 0 24 24"><g transform="translate(12 12)"><circle cx="3" cy="-3" r="5" fill="#f0b040" stroke="#b07010" stroke-width="1"/><circle cx="4.5" cy="-4.5" r="1.4" fill="#dadad8"/><path d="M0 0 L-7 7 M-5 5 L-3 7 M-3 3 L-1 5" stroke="#d09020" stroke-width="2.2"/></g></svg>
<div class="a" style="left:9px;top:829px;width:544px;height:241px;background:#fcfcfc;"></div>
<div class="a" style="left:9px;top:852px;width:544px;height:1px;background:#e2e2e0;"></div>
<div class="a" style="left:159px;top:829px;width:1px;height:24px;background:#e4e4e2;"></div>
<div class="a" style="left:309px;top:829px;width:1px;height:24px;background:#e4e4e2;"></div>
<div class="a" style="left:335px;top:829px;width:1px;height:24px;background:#e4e4e2;"></div>
<div class="a" style="left:410px;top:829px;width:1px;height:24px;background:#e4e4e2;"></div>
<div class="t" style="left:16.60px;top:834.50px;font-size:13px;color:#8d8d8d;font-weight:bold;transform:scaleX(1.1579);transform-origin:0 0;">Name</div>
<div class="t" style="left:166.00px;top:834.50px;font-size:13px;color:#8d8d8d;font-weight:bold;transform:scaleX(1.1688);transform-origin:0 0;">Value</div>
<div class="t" style="left:342.60px;top:834.50px;font-size:13px;color:#8d8d8d;font-weight:bold;transform:scaleX(1.1233);transform-origin:0 0;">Type</div>
<div class="t" style="left:417.00px;top:834.50px;font-size:13px;color:#8d8d8d;font-weight:bold;transform:scaleX(1.1715);transform-origin:0 0;">Time Track</div>
<svg style="left:26px;top:852px" width="24" height="24" viewBox="0 0 24 24"><g transform="translate(12 12)"><path d="M-6-4 C-4-6 -1-5 6-5.5 V-3.5 H3 V3 C3 5 4 5 5.5 4.5 V6 C2 7 0.5 6 0.5 3.5 V-3.5 H-2 V6 H-4.5 V-3.5 C-5.5-3.5 -6-3 -6.5-2.5Z" fill="#222"/></g></svg>
<div class="t" style="left:48.30px;top:857.80px;font-size:13px;color:#2e3436;transform:scaleX(1.1000);transform-origin:0 0;">Z Depth</div>
<div class="t" style="left:164.30px;top:857.80px;font-size:13px;color:#2e3436;transform:scaleX(1.0800);transform-origin:0 0;">0.0</div>
<div class="t" style="left:340.00px;top:857.80px;font-size:13px;color:#2e3436;transform:scaleX(1.1000);transform-origin:0 0;">real</div>
<div class="a" style="left:9px;top:876px;width:544px;height:19px;background:#efefef;"></div>
<svg style="left:26px;top:873px" width="24" height="24" viewBox="0 0 24 24"><g transform="translate(12 12)"><path d="M-6-4 C-4-6 -1-5 6-5.5 V-3.5 H3 V3 C3 5 4 5 5.5 4.5 V6 C2 7 0.5 6 0.5 3.5 V-3.5 H-2 V6 H-4.5 V-3.5 C-5.5-3.5 -6-3 -6.5-2.5Z" fill="#222"/></g></svg>
<div class="t" style="left:48.30px;top:878.80px;font-size:13px;color:#2e3436;transform:scaleX(1.1000);transform-origin:0 0;">Opacity</div>
<div class="t" style="left:164.30px;top:878.80px;font-size:13px;color:#2e3436;transform:scaleX(1.0800);transform-origin:0 0;">1.0</div>
<div class="t" style="left:340.00px;top:878.80px;font-size:13px;color:#2e3436;transform:scaleX(1.1000);transform-origin:0 0;">real</div>
<svg style="left:26px;top:894px" width="24" height="24" viewBox="0 0 24 24"><g transform="translate(12 12)"><path d="M-4-6 H4 V6 H-4Z M-4 0 H4" fill="none" stroke="#111" stroke-width="2.2" stroke-dasharray="3 1.2"/></g></svg>
<div class="t" style="left:48.30px;top:899.80px;font-size:13px;color:#2e3436;transform:scaleX(1.1000);transform-origin:0 0;">Blend Method</div>
<div class="t" style="left:164.30px;top:899.80px;font-size:13px;color:#2e3436;transform:scaleX(1.0800);transform-origin:0 0;">Composite</div>
<div class="t" style="left:340.00px;top:899.80px;font-size:13px;color:#2e3436;transform:scaleX(1.1000);transform-origin:0 0;">integer</div>
<div class="a" style="left:9px;top:918px;width:544px;height:19px;background:#efefef;"></div>
<svg style="left:26px;top:915px" width="24" height="24" viewBox="0 0 24 24"><g transform="translate(12 12)"><defs><linearGradient id="cg"><stop offset="0" stop-color="#10d040"/><stop offset=".5" stop-color="#2040f0"/><stop offset="1" stop-color="#f02020"/></linearGradient></defs><path d="M-6-6 L6 0 L-5 6Z" fill="url(#cg)"/><path d="M-6-6 L0-3 L-5 6Z" fill="#f0d020" opacity=".5"/></g></svg>
<div class="t" style="left:48.30px;top:920.80px;font-size:13px;color:#2e3436;transform:scaleX(1.1000);transform-origin:0 0;">Color</div>
<div class="t" style="left:340.00px;top:920.80px;font-size:13px;color:#2e3436;transform:scaleX(1.1000);transform-origin:0 0;">color</div>
<svg style="left:26px;top:936px" width="24" height="24" viewBox="0 0 24 24"><g transform="translate(12 12)"><circle r="5.6" fill="#a8d090" stroke="#333" stroke-width="1.3"/></g></svg>
<div class="t" style="left:48.30px;top:941.80px;font-size:13px;color:#2e3436;transform:scaleX(1.1000);transform-origin:0 0;">Origin</div>
<div class="t" style="left:164.30px;top:941.80px;font-size:13px;color:#2e3436;transform:scaleX(1.0800);transform-origin:0 0;">0.0px,0.0px</div>
<div class="a" style="left:0;top:0;width:409px;height:1080px;overflow:hidden"><div class="t" style="left:340.00px;top:941.80px;font-size:13px;color:#2e3436;transform:scaleX(1.1000);transform-origin:0 0;">vector (Cor</div>
</div><div class="a" style="left:9px;top:960px;width:544px;height:19px;background:#efefef;"></div>
<svg style="left:26px;top:957px" width="24" height="24" viewBox="0 0 24 24"><g transform="translate(12 12)"><path d="M-3.5-4 A5.5 5.5 0 1 0 3.5-4" fill="none" stroke="#222" stroke-width="1.6"/><path d="M0-7 V0" stroke="#222" stroke-width="1.6"/></g></svg>
<div class="t" style="left:48.30px;top:962.80px;font-size:13px;color:#2e3436;transform:scaleX(1.1000);transform-origin:0 0;">Invert</div>
<div class="t" style="left:340.00px;top:962.80px;font-size:13px;color:#2e3436;transform:scaleX(1.1000);transform-origin:0 0;">bool</div>
<svg style="left:26px;top:978px" width="24" height="24" viewBox="0 0 24 24"><g transform="translate(12 12)"><path d="M-3.5-4 A5.5 5.5 0 1 0 3.5-4" fill="none" stroke="#222" stroke-width="1.6"/><path d="M0-7 V0" stroke="#222" stroke-width="1.6"/></g></svg>
<div class="t" style="left:48.30px;top:983.80px;font-size:13px;color:#2e3436;transform:scaleX(1.1000);transform-origin:0 0;">Antialiasing</div>
<div class="t" style="left:340.00px;top:983.80px;font-size:13px;color:#2e3436;transform:scaleX(1.1000);transform-origin:0 0;">bool</div>
<div class="a" style="left:9px;top:1002px;width:544px;height:19px;background:#efefef;"></div>
<svg style="left:26px;top:999px" width="24" height="24" viewBox="0 0 24 24"><g transform="translate(12 12)"><path d="M-6-4 C-4-6 -1-5 6-5.5 V-3.5 H3 V3 C3 5 4 5 5.5 4.5 V6 C2 7 0.5 6 0.5 3.5 V-3.5 H-2 V6 H-4.5 V-3.5 C-5.5-3.5 -6-3 -6.5-2.5Z" fill="#222"/></g></svg>
<div class="t" style="left:48.30px;top:1004.80px;font-size:13px;color:#2e3436;transform:scaleX(1.1000);transform-origin:0 0;">Feather</div>
<div class="t" style="left:164.30px;top:1004.80px;font-size:13px;color:#2e3436;transform:scaleX(1.0800);transform-origin:0 0;">0.0px</div>
<div class="t" style="left:340.00px;top:1004.80px;font-size:13px;color:#2e3436;transform:scaleX(1.1000);transform-origin:0 0;">real</div>
<svg style="left:26px;top:1020px" width="24" height="24" viewBox="0 0 24 24"><g transform="translate(12 12)"><path d="M-4-6 H4 V6 H-4Z M-4 0 H4" fill="none" stroke="#111" stroke-width="2.2" stroke-dasharray="3 1.2"/></g></svg>
<div class="t" style="left:48.30px;top:1025.80px;font-size:13px;color:#2e3436;transform:scaleX(1.1000);transform-origin:0 0;">Type of Feather</div>
<div class="t" style="left:164.30px;top:1025.80px;font-size:13px;color:#2e3436;transform:scaleX(1.0800);transform-origin:0 0;">Fast Gaussian Blur</div>
<div class="t" style="left:340.00px;top:1025.80px;font-size:13px;color:#2e3436;transform:scaleX(1.1000);transform-origin:0 0;">integer</div>
<div class="a" style="left:9px;top:1044px;width:544px;height:19px;background:#efefef;"></div>
<svg style="left:26px;top:1041px" width="24" height="24" viewBox="0 0 24 24"><g transform="translate(12 12)"><path d="M-4-6 H4 V6 H-4Z M-4 0 H4" fill="none" stroke="#111" stroke-width="2.2" stroke-dasharray="3 1.2"/></g></svg>
<div class="t" style="left:48.30px;top:1046.80px;font-size:13px;color:#2e3436;transform:scaleX(1.1000);transform-origin:0 0;">Winding Style</div>
<div class="t" style="left:164.30px;top:1046.80px;font-size:13px;color:#2e3436;transform:scaleX(1.0800);transform-origin:0 0;">Even/Odd</div>
<div class="t" style="left:340.00px;top:1046.80px;font-size:13px;color:#2e3436;transform:scaleX(1.1000);transform-origin:0 0;">integer</div>
<svg style="left:26px;top:1062px" width="24" height="24" viewBox="0 0 24 24"><g transform="translate(12 12)"><path d="M-6-4 C-4-6 -1-5 6-5.5 V-3.5 H3 V3 C3 5 4 5 5.5 4.5 V6 C2 7 0.5 6 0.5 3.5 V-3.5 H-2 V6 H-4.5 V-3.5 C-5.5-3.5 -6-3 -6.5-2.5Z" fill="#222"/></g></svg>
<div class="a" style="left:161px;top:917px;width:147px;height:20px;background:#000;border:2px solid #000;box-shadow:inset 0 0 0 1px #fff,inset 0 0 0 3px #000;"></div>
<svg style="left:143px;top:936px" width="24" height="24" viewBox="0 0 24 24"><g transform="translate(12 12)"><path d="M2-6 L-1-2" stroke="#2a5ab8" stroke-width="1.4"/><ellipse cx="-1" cy="2" rx="3" ry="3.5" fill="none" stroke="#2a5ab8" stroke-width="1.6" transform="rotate(30)"/><ellipse cx="2" cy="0" rx="2.5" ry="3" fill="none" stroke="#2a5ab8" stroke-width="1.4" transform="rotate(30)"/></g></svg>
<svg style="left:164px;top:982px" width="14" height="14" viewBox="0 0 14 14"><path d="M1 7 L4.5 12 L13 1.5" fill="none" stroke="#222" stroke-width="1.8"/></svg>
<div class="a" style="left:422px;top:940px;width:2px;height:17px;background:#2020d0;"></div>
<div class="a" style="left:9px;top:1067px;width:544px;height:1px;background:repeating-linear-gradient(90deg,#b8b8b8 0 6px,transparent 6px 10px);"></div>
<div class="a" style="left:553px;top:792px;width:3px;height:278px;background:#bebeb9;"></div>
<div class="a" style="left:556px;top:792px;width:685px;height:36px;background:#dadad8;"></div>
<div class="a" style="left:556px;top:828px;width:685px;height:1px;background:#c8c8c4;"></div>
<div class="a" style="left:564px;top:826px;width:54px;height:3px;background:#3e8ddd;"></div>
<svg style="left:579px;top:798px" width="24" height="24" viewBox="0 0 24 24"><g transform="translate(12 12)"><path d="M-7 0 C-7-5 -3-8 2-8 H8 V0 C8 5 4 8 0 8 C-4 8 -7 5 -7 0Z" fill="url(#amg)" stroke="#333" stroke-width="1.4"/><path d="M-3-1 H3 L0 2Z" fill="#fff" stroke="#333" stroke-width="1"/></g></svg>
<svg style="left:641px;top:798px" width="24" height="24" viewBox="0 0 24 24"><g transform="translate(12 12)"><path d="M-6-8 V7 M-7 7 H8 M-8-6 L-6-8 L-4-6 M6 5 L8 7 L6 9" fill="none" stroke="#222" stroke-width="1.4"/><path d="M-5 4 C-1 4 -2-3 1-3 C4-3 2 3 5 2 C7 1 7-4 6-7" fill="none" stroke="#f08020" stroke-width="2.6"/></g></svg>
<svg style="left:703px;top:798px" width="24" height="24" viewBox="0 0 24 24"><g transform="translate(12 12)"><rect x="-6" y="-4" width="12" height="11" fill="#e8e8d8" stroke="#555" stroke-width="1.2"/><path d="M-6-4 L-4-7 H6 L6-4" fill="#9ab860" stroke="#555" stroke-width="1"/></g></svg>
<svg style="left:765px;top:798px" width="24" height="24" viewBox="0 0 24 24"><g transform="translate(12 12)"><path d="M-6-3 L0-8 L6-3 V8 H-6Z" fill="#4a7ac8" stroke="#2a5aa8" stroke-width="1"/><path d="M-2 1 L-4 3 L-2 5 M2 1 L4 3 L2 5" fill="none" stroke="#fff" stroke-width="1.1"/></g></svg>
<svg style="left:827px;top:798px" width="24" height="24" viewBox="0 0 24 24"><g transform="translate(12 12)"><path d="M-7-3 H-3 L2-7 V7 L-3 3 H-7Z" fill="#ccc" stroke="#666" stroke-width="1"/><path d="M4-4 A5 5 0 0 1 4 4 M6-6 A8 8 0 0 1 6 6" fill="none" stroke="#3a6ab8" stroke-width="1.3"/></g></svg>
<div class="a" style="left:556px;top:829px;width:685px;height:241px;background:#fcfcfc;"></div>
<div class="a" style="left:558px;top:829px;width:633px;height:10px;background:#6f8ab8;"></div>
<div class="a" style="left:558px;top:839px;width:633px;height:14px;background:#7e7e7e;"></div>
<svg style="left:0px;top:0px" width="1920" height="1080" viewBox="0 0 1920 1080"><rect x="599" y="839" width="1.2" height="4" fill="#222"/><rect x="629" y="839" width="1.2" height="4" fill="#222"/><rect x="660" y="839" width="1.2" height="4" fill="#222"/><rect x="691" y="839" width="1.2" height="4" fill="#222"/><rect x="721" y="839" width="1.2" height="4" fill="#222"/><rect x="752" y="839" width="1.2" height="4" fill="#222"/><rect x="783" y="839" width="1.2" height="4" fill="#222"/><rect x="813" y="839" width="1" height="14" fill="#222"/><rect x="844" y="839" width="1.2" height="4" fill="#222"/><rect x="875" y="839" width="1.2" height="4" fill="#222"/><rect x="905" y="839" width="1.2" height="4" fill="#222"/><rect x="936" y="839" width="1.2" height="4" fill="#222"/><rect x="967" y="839" width="1.2" height="4" fill="#222"/><rect x="997" y="839" width="1.2" height="4" fill="#222"/><rect x="1028" y="839" width="1.2" height="4" fill="#222"/><rect x="1059" y="839" width="1" height="14" fill="#222"/><rect x="1089" y="839" width="1.2" height="4" fill="#222"/><rect x="1120" y="839" width="1.2" height="4" fill="#222"/><rect x="1151" y="839" width="1.2" height="4" fill="#222"/><rect x="1182" y="839" width="1.2" height="4" fill="#222"/></svg>
<div class="a" style="left:558px;top:839px;width:633px;height:14px;overflow:hidden"><div class="t" style="left:14px;top:1px;font-size:17px;color:#2a2a2a">0f</div><div class="t" style="left:257px;top:1px;font-size:17px;color:#2a2a2a">48f</div><div class="t" style="left:503px;top:1px;font-size:17px;color:#2a2a2a">96f</div></div>
<svg style="left:562px;top:830px" width="12" height="8" viewBox="0 0 12 8"><path d="M1 1 H11 L6 6Z" fill="#000"/></svg>
<div class="a" style="left:566px;top:839px;width:3px;height:14px;background:#f0a000;"></div>
<div class="a" style="left:569px;top:839px;width:5px;height:14px;background:#10c010;"></div>
<div class="a" style="left:558px;top:876px;width:633px;height:19px;background:#efefef;"></div>
<div class="a" style="left:558px;top:918px;width:633px;height:19px;background:#efefef;"></div>
<div class="a" style="left:558px;top:960px;width:633px;height:19px;background:#efefef;"></div>
<div class="a" style="left:558px;top:1002px;width:633px;height:19px;background:#efefef;"></div>
<div class="a" style="left:558px;top:1044px;width:633px;height:19px;background:#efefef;"></div>
<div class="a" style="left:567px;top:853px;width:2px;height:204px;background:#4a4ad8;"></div>
<div class="a" style="left:556px;top:1057px;width:647px;height:13px;background:#e8e8e7;"></div>
<div class="a" style="left:561px;top:1060px;width:639px;height:6px;background:#c8c8c6;border-radius:3px;"></div>
<div class="a" style="left:1191px;top:829px;width:12px;height:228px;background:#e8e8e7;"></div>
<div class="a" style="left:1194px;top:831px;width:6px;height:197px;background:#c8c8c6;border-radius:3px;"></div>
<div class="a" style="left:1203px;top:829px;width:38px;height:228px;background:#e8e8e7;"></div>
<div class="a" style="left:1207px;top:833px;width:28px;height:32px;background:#d6d6d4;border:1px solid #c8c8c5;border-radius:4px;"></div>
<svg style="left:1209px;top:835px" width="24" height="24" viewBox="0 0 24 24"><g transform="translate(12 12)"><path d="M0-8 L3-5 L1-5 L1-1 L5-1 L5-3 L8 0 L5 3 L5 1 L1 1 L1 5 L3 5 L0 8 L-3 5 L-1 5 L-1 1 L-5 1 L-5 3 L-8 0 L-5-3 L-5-1 L-1-1 L-1-5 L-3-5Z" fill="#7aa0d8" stroke="#4a72b8" stroke-width="1"/><circle r="3" fill="#7aa0d8" stroke="#4a72b8"/></g></svg>
<svg style="left:1209px;top:869px" width="24" height="24" viewBox="0 0 24 24"><g transform="translate(12 12)"><rect x="-7" y="-8" width="6" height="6" fill="#f8f0c0" stroke="#222" stroke-width="1"/><rect x="1" y="1" width="6" height="6" fill="#f8f0c0" stroke="#222" stroke-width="1"/><path d="M-4-2 V4 H0" fill="none" stroke="#222" stroke-width="1.3"/></g></svg>
<svg style="left:1209px;top:902px" width="24" height="24" viewBox="0 0 24 24"><g transform="translate(12 12)"><rect x="-8" y="-7" width="10" height="9" fill="#dde8f8" stroke="#4a72b8"/><rect x="-3" y="-3" width="11" height="10" fill="#c8daf2" stroke="#4a72b8"/></g></svg>
<div class="a" style="left:1207px;top:940px;width:28px;height:1px;background:#d0d0cd;"></div>
<svg style="left:1209px;top:950px" width="24" height="24" viewBox="0 0 24 24"><g transform="translate(12 12)"><path d="M0-7 L7 0 L0 7 L-7 0Z" fill="#d8b070" stroke="#888" stroke-width="1"/><path d="M0-7 L7 0 L0 7Z" fill="#c09858"/></g></svg>
<svg style="left:1209px;top:985px" width="24" height="24" viewBox="0 0 24 24"><g transform="translate(12 12)"><circle r="6.5" fill="#a8e070" stroke="#888" stroke-width="1"/><path d="M0-6.5 A6.5 6.5 0 0 1 0 6.5Z" fill="#80c050"/></g></svg>
<svg style="left:1209px;top:1024px" width="24" height="24" viewBox="0 0 24 24"><g transform="translate(12 12)"><path d="M-2-5 L3 0 L-2 5Z" fill="#888"/></g></svg>
<div class="a" style="left:1203px;top:1057px;width:38px;height:13px;background:#fcfcfc;"></div>
<div class="a" style="left:1241px;top:63px;width:3px;height:1007px;background:#bebeb9;"></div>
<div class="a" style="left:1244px;top:63px;width:555px;height:36px;background:#dadad8;"></div>
<div class="a" style="left:1244px;top:99px;width:555px;height:1px;background:#c8c8c4;"></div>
<div class="a" style="left:1252px;top:97px;width:54px;height:3px;background:#3e8ddd;"></div>
<svg style="left:1267px;top:69px" width="24" height="24" viewBox="0 0 24 24"><g transform="translate(12 12)"><path d="M-7-6 H8 V4 L4 8 H-7Z" fill="#c8e8b0" stroke="#50a030" stroke-width="1.3"/><path d="M-4-3.5 H-1 M1-3.5 H3 M5-3.5 H6" stroke="#fff" stroke-width="1.2"/><path d="M8 4 L4 4 L4 8" fill="#fff" stroke="#50a030" stroke-width="1"/></g></svg>
<svg style="left:1329px;top:69px" width="24" height="24" viewBox="0 0 24 24"><g transform="translate(12 12)"><rect x="-7" y="-8" width="5" height="15" fill="#f08020" stroke="#a04010" stroke-width=".8"/><path d="M-2-1 L3-6 L7-2 L2 3Z" fill="#3a64b8"/><rect x="-3" y="3" width="10" height="4" fill="#8a58a8"/></g></svg>
<svg style="left:1391px;top:69px" width="24" height="24" viewBox="0 0 24 24"><g transform="translate(12 12)"><circle r="6.5" fill="#fff" stroke="#8a60a0" stroke-width="2"/><path d="M4-4 L-1 0 L1 1Z" fill="#e02020"/><path d="M-4 4 L-1 0 L1 1Z" fill="#f0d020"/></g></svg>
<svg style="left:1453px;top:69px" width="24" height="24" viewBox="0 0 24 24"><g transform="translate(12 12)"><circle r="7" fill="#3a6ab8"/><path d="M0.5-2 L-1.5 4 H1" stroke="#fff" stroke-width="1.8" fill="none"/><circle cx="1" cy="-4.5" r="1.1" fill="#fff"/></g></svg>
<div class="a" style="left:1244px;top:100px;width:555px;height:134px;background:#fafafa;"></div>
<div class="a" style="left:1244px;top:100px;width:1px;height:134px;background:#d8d8d6;"></div>
<svg style="left:1261px;top:99px" width="24" height="24" viewBox="0 0 24 24"><g transform="translate(12 12)"><path d="M-7-6 H8 V4 L4 8 H-7Z" fill="#c8e8b0" stroke="#50a030" stroke-width="1.3"/><path d="M-4-3.5 H-1 M1-3.5 H3 M5-3.5 H6" stroke="#fff" stroke-width="1.2"/><path d="M8 4 L4 4 L4 8" fill="#fff" stroke="#50a030" stroke-width="1"/></g></svg>
<div class="t" style="left:1283.30px;top:104.60px;font-size:13px;color:#2e3436;transform:scaleX(1.0924);transform-origin:0 0;">ShapeTest bug.sifz</div>
<div class="a" style="left:1244px;top:234px;width:555px;height:4px;background:#c4c4c0;"></div>
<div class="a" style="left:1244px;top:238px;width:555px;height:36px;background:#dadad8;"></div>
<div class="a" style="left:1244px;top:274px;width:555px;height:1px;background:#c8c8c4;"></div>
<div class="a" style="left:1252px;top:272px;width:54px;height:3px;background:#3e8ddd;"></div>
<svg style="left:1267px;top:244px" width="24" height="24" viewBox="0 0 24 24"><g transform="translate(12 12)"><path d="M-4-7 L5 2 L1 2.5 L3.5 7 L2 8 L-0.5 3.5 L-4 6.5Z" fill="#c8d8f0" stroke="#4a72b8" stroke-width="1.2" stroke-linejoin="round"/></g></svg>
<svg style="left:1329px;top:244px" width="24" height="24" viewBox="0 0 24 24"><g transform="translate(12 12)"><path d="M6 6 C6 -1 2-3 -3-3 V-7 L-9-1 L-3 5 V1 C1 1 4 2 6 6Z" fill="#f0d860" stroke="#d0b030" stroke-width=".8"/></g></svg>
<div class="a" style="left:1244px;top:275px;width:555px;height:455px;background:#fafafa;"></div>
<div class="a" style="left:1244px;top:275px;width:1px;height:455px;background:#d8d8d6;"></div>
<div class="t" style="left:1250.50px;top:282.00px;font-size:13px;color:#8a8a8a;font-weight:bold;transform:scaleX(1.1638);transform-origin:0 0;">Transform Tool</div>
<div class="t" style="left:1250.50px;top:300.00px;font-size:13px;color:#8f8f8f;transform:scaleX(1.1324);transform-origin:0 0;">Ctrl to rotate</div>
<div class="t" style="left:1250.50px;top:318.00px;font-size:13px;color:#8f8f8f;transform:scaleX(1.1009);transform-origin:0 0;">Alt to scale</div>
<div class="t" style="left:1250.50px;top:336.00px;font-size:13px;color:#8f8f8f;transform:scaleX(1.1205);transform-origin:0 0;">Shift to constrain</div>
<div class="a" style="left:1244px;top:730px;width:555px;height:3px;background:#c4c4c0;"></div>
<div class="a" style="left:1244px;top:733px;width:555px;height:36px;background:#dadad8;"></div>
<div class="a" style="left:1244px;top:769px;width:555px;height:1px;background:#c8c8c4;"></div>
<div class="a" style="left:1252px;top:767px;width:54px;height:3px;background:#3e8ddd;"></div>
<svg style="left:1267px;top:739px" width="24" height="24" viewBox="0 0 24 24"><g transform="translate(12 12)"><path d="M-6-7 H8 L6-2 H-8Z" fill="#c8d8f0" stroke="#4a6aa8" stroke-width="1"/><path d="M-6-2 H8 L6 2 H-8Z M-6 2 H8 L6 6 H-8Z" fill="#8aa8d8" stroke="#4a6aa8" stroke-width="1"/></g></svg>
<svg style="left:1329px;top:739px" width="24" height="24" viewBox="0 0 24 24"><g transform="translate(12 12)"><path d="M-4-7 H8 L6-2 H-6Z" fill="#c8d8f0" stroke="#4a6aa8" stroke-width="1"/><path d="M-8-2 H4 L2 3 H-10Z" fill="#e8a0a0" stroke="#e07020" stroke-width="1"/><path d="M-4 3 H8 L6 7 H-6Z" fill="#8aa8d8" stroke="#4a6aa8" stroke-width="1"/></g></svg>
<div class="a" style="left:1244px;top:770px;width:555px;height:263px;background:#fcfcfc;"></div>
<div class="a" style="left:1244px;top:793px;width:555px;height:1px;background:#e2e2e0;"></div>
<div class="a" style="left:1267px;top:770px;width:1px;height:23px;background:#e4e4e2;"></div>
<div class="a" style="left:1359px;top:770px;width:1px;height:23px;background:#e4e4e2;"></div>
<div class="a" style="left:1722px;top:770px;width:1px;height:23px;background:#e4e4e2;"></div>
<div class="t" style="left:1360.50px;top:774.60px;font-size:13px;color:#8d8d8d;font-weight:bold;transform:scaleX(1.1579);transform-origin:0 0;">Name</div>
<div class="t" style="left:1723.00px;top:774.60px;font-size:13px;color:#8d8d8d;font-weight:bold;transform:scaleX(1.2194);transform-origin:0 0;">Z Depth</div>
<div class="a" style="left:1244px;top:796px;width:555px;height:20px;background:#4a90d9;"></div>
<div class="a" style="left:1268px;top:795px;width:531px;height:1px;background:repeating-linear-gradient(90deg,#2a5a98 0 6px,transparent 6px 10px);"></div>
<div class="a" style="left:1248px;top:798px;width:16px;height:16px;background:#ebebea;border:1px solid #2a3a50;border-radius:3px;"></div>
<svg style="left:1248px;top:798px" width="16" height="16" viewBox="0 0 16 16"><path d="M3.5 8 L6.5 11 L12.5 4" fill="none" stroke="#8a8a8a" stroke-width="2.2"/></svg>
<svg style="left:1338px;top:793px" width="24" height="24" viewBox="0 0 24 24"><g transform="translate(12 12)"><path d="M-6 3 C-7-3 -3-6 1-7 L7 0 L1 6 C-2 7 -5 6 -6 3Z" fill="#6a90c8" stroke="#3a64a8" stroke-width=".8"/></g></svg>
<div class="t" style="left:1364.60px;top:799.00px;font-size:13px;color:#ffffff;transform:scaleX(1.0800);transform-origin:0 0;">rect8</div>
<div class="t" style="left:1726.00px;top:799.00px;font-size:13px;color:#ffffff;transform:scaleX(1.0800);transform-origin:0 0;">7.0</div>
<div class="a" style="left:1244px;top:818px;width:555px;height:20px;background:#efefef;"></div>
<div class="a" style="left:1248px;top:820px;width:16px;height:16px;background:#ebebea;border:1px solid #c8c8c6;border-radius:3px;"></div>
<svg style="left:1248px;top:820px" width="16" height="16" viewBox="0 0 16 16"><path d="M3.5 8 L6.5 11 L12.5 4" fill="none" stroke="#8a8a8a" stroke-width="2.2"/></svg>
<svg style="left:1338px;top:815px" width="24" height="24" viewBox="0 0 24 24"><g transform="translate(12 12)"><path d="M-3-7 C-8-2 -6 6 0 6 C3 6 6 4 7 1" fill="none" stroke="#2a4a98" stroke-width="2"/></g></svg>
<div class="t" style="left:1364.60px;top:821.00px;font-size:13px;color:#2e3436;transform:scaleX(1.0800);transform-origin:0 0;">rect7</div>
<div class="t" style="left:1726.00px;top:821.00px;font-size:13px;color:#2e3436;transform:scaleX(1.0800);transform-origin:0 0;">8.0</div>
<div class="a" style="left:1244px;top:840px;width:555px;height:20px;background:#4a90d9;"></div>
<div class="a" style="left:1248px;top:842px;width:16px;height:16px;background:#ebebea;border:1px solid #2a3a50;border-radius:3px;"></div>
<svg style="left:1248px;top:842px" width="16" height="16" viewBox="0 0 16 16"><path d="M3.5 8 L6.5 11 L12.5 4" fill="none" stroke="#8a8a8a" stroke-width="2.2"/></svg>
<svg style="left:1338px;top:837px" width="24" height="24" viewBox="0 0 24 24"><g transform="translate(12 12)"><path d="M-6 3 C-7-3 -3-6 1-7 L7 0 L1 6 C-2 7 -5 6 -6 3Z" fill="#6a90c8" stroke="#3a64a8" stroke-width=".8"/></g></svg>
<div class="t" style="left:1364.60px;top:843.00px;font-size:13px;color:#ffffff;transform:scaleX(1.0800);transform-origin:0 0;">rect7</div>
<div class="t" style="left:1726.00px;top:843.00px;font-size:13px;color:#ffffff;transform:scaleX(1.0800);transform-origin:0 0;">9.0</div>
<div class="a" style="left:1244px;top:862px;width:555px;height:20px;background:#efefef;"></div>
<div class="a" style="left:1248px;top:864px;width:16px;height:16px;background:#ebebea;border:1px solid #c8c8c6;border-radius:3px;"></div>
<svg style="left:1248px;top:864px" width="16" height="16" viewBox="0 0 16 16"><path d="M3.5 8 L6.5 11 L12.5 4" fill="none" stroke="#8a8a8a" stroke-width="2.2"/></svg>
<svg style="left:1338px;top:859px" width="24" height="24" viewBox="0 0 24 24"><g transform="translate(12 12)"><path d="M-3-7 C-8-2 -6 6 0 6 C3 6 6 4 7 1" fill="none" stroke="#2a4a98" stroke-width="2"/></g></svg>
<div class="t" style="left:1364.60px;top:865.00px;font-size:13px;color:#2e3436;transform:scaleX(1.0800);transform-origin:0 0;">rect6</div>
<div class="t" style="left:1726.00px;top:865.00px;font-size:13px;color:#2e3436;transform:scaleX(1.0800);transform-origin:0 0;">10.0</div>
<div class="a" style="left:1248px;top:886px;width:16px;height:16px;background:#ebebea;border:1px solid #c8c8c6;border-radius:3px;"></div>
<svg style="left:1248px;top:886px" width="16" height="16" viewBox="0 0 16 16"><path d="M3.5 8 L6.5 11 L12.5 4" fill="none" stroke="#8a8a8a" stroke-width="2.2"/></svg>
<svg style="left:1338px;top:881px" width="24" height="24" viewBox="0 0 24 24"><g transform="translate(12 12)"><path d="M-6 3 C-7-3 -3-6 1-7 L7 0 L1 6 C-2 7 -5 6 -6 3Z" fill="#4a7ac8" stroke="#2a5aa8" stroke-width=".6"/></g></svg>
<div class="t" style="left:1364.60px;top:887.00px;font-size:13px;color:#2e3436;transform:scaleX(1.0800);transform-origin:0 0;">rect6</div>
<div class="t" style="left:1726.00px;top:887.00px;font-size:13px;color:#2e3436;transform:scaleX(1.0800);transform-origin:0 0;">11.0</div>
<div class="a" style="left:1244px;top:906px;width:555px;height:20px;background:#efefef;"></div>
<div class="a" style="left:1248px;top:908px;width:16px;height:16px;background:#ebebea;border:1px solid #c8c8c6;border-radius:3px;"></div>
<svg style="left:1248px;top:908px" width="16" height="16" viewBox="0 0 16 16"><path d="M3.5 8 L6.5 11 L12.5 4" fill="none" stroke="#8a8a8a" stroke-width="2.2"/></svg>
<svg style="left:1338px;top:903px" width="24" height="24" viewBox="0 0 24 24"><g transform="translate(12 12)"><path d="M-3-7 C-8-2 -6 6 0 6 C3 6 6 4 7 1" fill="none" stroke="#2a4a98" stroke-width="2"/></g></svg>
<div class="t" style="left:1364.60px;top:909.00px;font-size:13px;color:#2e3436;transform:scaleX(1.0800);transform-origin:0 0;">rect5</div>
<div class="t" style="left:1726.00px;top:909.00px;font-size:13px;color:#2e3436;transform:scaleX(1.0800);transform-origin:0 0;">12.0</div>
<div class="a" style="left:1248px;top:930px;width:16px;height:16px;background:#ebebea;border:1px solid #c8c8c6;border-radius:3px;"></div>
<svg style="left:1248px;top:930px" width="16" height="16" viewBox="0 0 16 16"><path d="M3.5 8 L6.5 11 L12.5 4" fill="none" stroke="#8a8a8a" stroke-width="2.2"/></svg>
<svg style="left:1338px;top:925px" width="24" height="24" viewBox="0 0 24 24"><g transform="translate(12 12)"><path d="M-6 3 C-7-3 -3-6 1-7 L7 0 L1 6 C-2 7 -5 6 -6 3Z" fill="#4a7ac8" stroke="#2a5aa8" stroke-width=".6"/></g></svg>
<div class="t" style="left:1364.60px;top:931.00px;font-size:13px;color:#2e3436;transform:scaleX(1.0800);transform-origin:0 0;">rect5</div>
<div class="t" style="left:1726.00px;top:931.00px;font-size:13px;color:#2e3436;transform:scaleX(1.0800);transform-origin:0 0;">13.0</div>
<div class="a" style="left:1244px;top:950px;width:555px;height:20px;background:#efefef;"></div>
<div class="a" style="left:1248px;top:952px;width:16px;height:16px;background:#ebebea;border:1px solid #c8c8c6;border-radius:3px;"></div>
<svg style="left:1248px;top:952px" width="16" height="16" viewBox="0 0 16 16"><path d="M3.5 8 L6.5 11 L12.5 4" fill="none" stroke="#8a8a8a" stroke-width="2.2"/></svg>
<svg style="left:1338px;top:947px" width="24" height="24" viewBox="0 0 24 24"><g transform="translate(12 12)"><path d="M-3-7 C-8-2 -6 6 0 6 C3 6 6 4 7 1" fill="none" stroke="#2a4a98" stroke-width="2"/></g></svg>
<div class="t" style="left:1364.60px;top:953.00px;font-size:13px;color:#2e3436;transform:scaleX(1.0800);transform-origin:0 0;">rect3-8</div>
<div class="t" style="left:1726.00px;top:953.00px;font-size:13px;color:#2e3436;transform:scaleX(1.0800);transform-origin:0 0;">14.0</div>
<div class="a" style="left:1248px;top:974px;width:16px;height:16px;background:#ebebea;border:1px solid #c8c8c6;border-radius:3px;"></div>
<svg style="left:1248px;top:974px" width="16" height="16" viewBox="0 0 16 16"><path d="M3.5 8 L6.5 11 L12.5 4" fill="none" stroke="#8a8a8a" stroke-width="2.2"/></svg>
<svg style="left:1338px;top:969px" width="24" height="24" viewBox="0 0 24 24"><g transform="translate(12 12)"><path d="M-6 3 C-7-3 -3-6 1-7 L7 0 L1 6 C-2 7 -5 6 -6 3Z" fill="#4a7ac8" stroke="#2a5aa8" stroke-width=".6"/></g></svg>
<div class="t" style="left:1364.60px;top:975.00px;font-size:13px;color:#2e3436;transform:scaleX(1.0800);transform-origin:0 0;">rect3-8</div>
<div class="t" style="left:1726.00px;top:975.00px;font-size:13px;color:#2e3436;transform:scaleX(1.0800);transform-origin:0 0;">15.0</div>
<div class="a" style="left:1244px;top:994px;width:555px;height:20px;background:#efefef;"></div>
<div class="a" style="left:1248px;top:996px;width:16px;height:16px;background:#ebebea;border:1px solid #c8c8c6;border-radius:3px;"></div>
<svg style="left:1248px;top:996px" width="16" height="16" viewBox="0 0 16 16"><path d="M3.5 8 L6.5 11 L12.5 4" fill="none" stroke="#8a8a8a" stroke-width="2.2"/></svg>
<svg style="left:1338px;top:991px" width="24" height="24" viewBox="0 0 24 24"><g transform="translate(12 12)"><path d="M-3-7 C-8-2 -6 6 0 6 C3 6 6 4 7 1" fill="none" stroke="#2a4a98" stroke-width="2"/></g></svg>
<div class="t" style="left:1364.60px;top:997.00px;font-size:13px;color:#2e3436;transform:scaleX(1.0800);transform-origin:0 0;">rect3</div>
<div class="t" style="left:1726.00px;top:997.00px;font-size:13px;color:#2e3436;transform:scaleX(1.0800);transform-origin:0 0;">16.0</div>
<div class="a" style="left:1248px;top:1018px;width:16px;height:16px;background:#ebebea;border:1px solid #c8c8c6;border-radius:3px;"></div>
<svg style="left:1248px;top:1018px" width="16" height="16" viewBox="0 0 16 16"><path d="M3.5 8 L6.5 11 L12.5 4" fill="none" stroke="#8a8a8a" stroke-width="2.2"/></svg>
<svg style="left:1338px;top:1013px" width="24" height="24" viewBox="0 0 24 24"><g transform="translate(12 12)"><path d="M-6 3 C-7-3 -3-6 1-7 L7 0 L1 6 C-2 7 -5 6 -6 3Z" fill="#4a7ac8" stroke="#2a5aa8" stroke-width=".6"/></g></svg>
<div class="t" style="left:1364.60px;top:1019.00px;font-size:13px;color:#2e3436;transform:scaleX(1.0800);transform-origin:0 0;">rect3</div>
<div class="t" style="left:1726.00px;top:1019.00px;font-size:13px;color:#2e3436;transform:scaleX(1.0800);transform-origin:0 0;">17.0</div>
<div class="a" style="left:1244px;top:1033px;width:555px;height:37px;background:#e8e8e7;"></div>
<div class="a" style="left:1244px;top:1033px;width:555px;height:1px;background:#fcfcfc;"></div>
<div class="a" style="left:1268px;top:1032px;width:531px;height:1px;background:repeating-linear-gradient(90deg,#b8b8b8 0 6px,transparent 6px 10px);"></div>
<div class="a" style="left:1244px;top:1070px;width:555px;height:1px;background:#e8e8e7;"></div>
<svg style="left:1250px;top:1040px" width="24" height="24" viewBox="0 0 24 24"><g transform="translate(12 12)"><path d="M-1.5-7 H1.5 V-1.5 H7 V1.5 H1.5 V7 H-1.5 V1.5 H-7 V-1.5 H-1.5Z" fill="#2a64c0"/></g></svg>
<div class="a" style="left:1283px;top:1040px;width:1px;height:24px;background:#d4d4d1;"></div>
<svg style="left:1292px;top:1040px" width="24" height="24" viewBox="0 0 24 24"><g transform="translate(12 12)"><path d="M-7 1 L0-6 L7 1 M-4 4 L0 0 L4 4" fill="none" stroke="#999" stroke-width="1.3"/><circle cx="0" cy="6" r="1" fill="#999"/></g></svg>
<svg style="left:1322px;top:1040px" width="24" height="24" viewBox="0 0 24 24"><g transform="translate(12 12)"><path d="M-7-1 L0 6 L7-1 M-4-4 L0 0 L4-4" fill="none" stroke="#999" stroke-width="1.3"/><circle cx="0" cy="-6" r="1" fill="#999"/></g></svg>
<div class="a" style="left:1355px;top:1040px;width:1px;height:24px;background:#d4d4d1;"></div>
<svg style="left:1365px;top:1040px" width="24" height="24" viewBox="0 0 24 24"><g transform="translate(12 12)"><rect x="-7" y="-8" width="6" height="6" fill="#f8f0c0" stroke="#222" stroke-width="1"/><rect x="1" y="1" width="6" height="6" fill="#f8f0c0" stroke="#222" stroke-width="1"/><path d="M-4-2 V4 H0" fill="none" stroke="#222" stroke-width="1.3"/></g></svg>
<svg style="left:1394px;top:1040px" width="24" height="24" viewBox="0 0 24 24"><g transform="translate(12 12)"><path d="M-8-6 H-3 L-1-4 H8 V7 H-8Z" fill="#50a030" stroke="#2a7010" stroke-width="1"/><path d="M-8-2 H8 V7 H-8Z" fill="#70c050"/></g></svg>
<svg style="left:1423px;top:1040px" width="24" height="24" viewBox="0 0 24 24"><g transform="translate(12 12)"><g opacity=".55"><path d="M-8-6 H-3 L-1-4 H8 V7 H-8Z" fill="#50a030" stroke="#2a7010" stroke-width="1"/><path d="M-6-1 H8 L6 7 H-8Z" fill="#a0d090"/></g></g></svg>
<svg style="left:1452px;top:1040px" width="24" height="24" viewBox="0 0 24 24"><g transform="translate(12 12)"><circle r="7.5" fill="#e02020"/><circle r="5" fill="#fff"/><path d="M-2.5-2.5 L2.5 2.5 M2.5-2.5 L-2.5 2.5" stroke="#222" stroke-width="1.8"/></g></svg>
<div class="a" style="left:1486px;top:1040px;width:1px;height:24px;background:#d4d4d1;"></div>
<svg style="left:1495px;top:1040px" width="24" height="24" viewBox="0 0 24 24"><g transform="translate(12 12)"><path d="M-5-8 L3 3 M5-8 L-3 3" stroke="#888" stroke-width="1.8"/><circle cx="-4" cy="5" r="3" fill="none" stroke="#d02020" stroke-width="2"/><circle cx="4" cy="5" r="3" fill="none" stroke="#d02020" stroke-width="2"/></g></svg>
<svg style="left:1524px;top:1040px" width="24" height="24" viewBox="0 0 24 24"><g transform="translate(12 12)"><rect x="-7" y="-7" width="9" height="10" fill="#f8f8f8" stroke="#888" stroke-width="1"/><rect x="-2" y="-2" width="9" height="10" fill="#f8f8f8" stroke="#888" stroke-width="1"/></g></svg>
<svg style="left:1553px;top:1040px" width="24" height="24" viewBox="0 0 24 24"><g transform="translate(12 12)"><rect x="-7" y="-6" width="13" height="14" fill="#e8d8a8" stroke="#c0a860" stroke-width="1"/><rect x="-3" y="-3" width="9" height="10" fill="#f8f8f8" stroke="#aaa" stroke-width="1"/></g></svg>
<div class="a" style="left:1799px;top:0px;width:121px;height:1080px;background:#372350;"></div>
<svg style="left:1849px;top:14px" width="21" height="22" viewBox="0 0 21 22"><path d="M0 3 L8 1.8 V10 H0Z M9.5 1.6 L20 0 V10 H9.5Z M0 11.5 H8 V19.7 L0 18.5Z M9.5 11.5 H20 V21 L9.5 19.9Z" fill="#fff"/></svg>
<svg style="left:1842px;top:60px" width="34" height="34" viewBox="0 0 34 34"><circle cx="19" cy="13" r="9.5" fill="none" stroke="#fff" stroke-width="2.4"/><path d="M12 20 L4 28" stroke="#fff" stroke-width="2.6" stroke-linecap="round"/></svg>
<div class="a" style="left:1811px;top:106px;width:97px;height:1px;background:#6a5a88;"></div>
<div class="a" style="left:1811px;top:109px;width:97px;height:1px;background:#6a5a88;"></div>
<div class="a" style="left:1844px;top:147px;width:30px;height:30px;background:#3c3c3c;"></div>
<svg style="left:1846px;top:149px" width="26" height="26" viewBox="0 0 26 26"><path d="M4 6 H10 L12 8 H22 V21 H4Z" fill="#5a7a8a"/><path d="M16 10.5 H10 L13 14 L10 17.5 H16" fill="none" stroke="#eee" stroke-width="1.3" stroke-linejoin="miter"/></svg>
<svg style="left:1846px;top:205px" width="26" height="28" viewBox="0 0 26 28"><path d="M4 2 L9 0 H17 L22 2 L25 6 L23 16 L13 26 L3 16 L1 6Z" fill="#f04a20"/><path d="M8 8 L13 10 L18 8 L20 12 L16 17 L13 20 L10 17 L6 12Z" fill="#fff"/><path d="M11 14 H15 L13 16Z" fill="#f04a20"/></svg>
<div class="a" style="left:1916px;top:197px;width:4px;height:48px;background:#a888d8;"></div>
<div class="a" style="left:1916px;top:256px;width:4px;height:48px;background:#a888d8;"></div>
<div class="a" style="left:1916px;top:315px;width:4px;height:48px;background:#a888d8;"></div>
<div class="a" style="left:1916px;top:374px;width:4px;height:48px;background:#a888d8;"></div>
<div class="a" style="left:1916px;top:428px;width:4px;height:58px;background:#a888d8;"></div>
<svg style="left:1845px;top:266px" width="28" height="28" viewBox="0 0 28 28"><circle cx="14" cy="14" r="14" fill="#8a60e0"/><path d="M5 13 L9 17 L14 12 L19 17 L23 13" fill="none" stroke="#fff" stroke-width="3" stroke-linejoin="round"/></svg>
<svg style="left:1845px;top:325px" width="28" height="26" viewBox="0 0 28 26"><path d="M14 1 L26 14 L20 15 L18 21 L14 18 L8 23 L10 16 L2 14Z" fill="#ccc" stroke="#111" stroke-width="1.5"/><path d="M6 14 C10 9 18 9 22 14 L16 18 L12 24 L10 18Z" fill="#111"/><circle cx="22" cy="20" r="1.5" fill="#111"/></svg>
<svg style="left:1848px;top:384px" width="22" height="28" viewBox="0 0 22 28"><defs><linearGradient id="tsg" x1="0" y1="0" x2="0" y2="1"><stop offset="0" stop-color="#8cc4f4"/><stop offset="1" stop-color="#2a5aa8"/></linearGradient></defs><path d="M11 1 C16 6 20 14 20 22 L11 27 L2 22 C2 14 6 6 11 1Z" fill="url(#tsg)" stroke="#111" stroke-width="1.5"/><path d="M5 12 L17 24 M17 12 L5 24" stroke="#123" stroke-width=".8"/></svg>
<div class="a" style="left:1799px;top:428px;width:117px;height:58px;background:#4f3278;"></div>
<svg style="left:1846px;top:440px" width="28" height="30" viewBox="0 0 28 30"><path d="M6 8 C6 0 22 0 22 10 C22 20 12 22 10 18" fill="none" stroke="#e04010" stroke-width="3"/><path d="M13 2 V18 L18 8" fill="none" stroke="#ddd" stroke-width="3"/><circle cx="7" cy="22" r="4" fill="none" stroke="#20a0f0" stroke-width="2.5"/><circle cx="17" cy="25" r="4" fill="none" stroke="#20a0f0" stroke-width="2.5"/></svg>
<div class="a" style="left:1811px;top:565px;width:97px;height:1px;background:#6a5a88;"></div>
<div class="a" style="left:1811px;top:568px;width:97px;height:1px;background:#6a5a88;"></div>
<div class="t" style="left:1832.00px;top:582.30px;font-size:15px;color:#c8bcd8;transform:scaleX(0.9813);transform-origin:0 0;">Desktop</div>
<svg style="left:1801px;top:614px" width="24" height="24" viewBox="0 0 24 24"><g transform="translate(12 12)"><path d="M-8-8 H0 L2-6 V9 H-8Z" fill="#f0d070"/><circle cx="3" cy="-1" r="3.5" fill="#333"/><path d="M-3 9 C-3 3 9 3 9 9Z" fill="#4a9a70"/></g></svg>
<svg style="left:1830px;top:614px" width="24" height="24" viewBox="0 0 24 24"><g transform="translate(12 12)"><rect x="-4" y="-8" width="12" height="9" fill="#3aa0e8" stroke="#ccc" stroke-width="1"/><path d="M-9 5 H5 L7 8 H-9Z" fill="#ddd"/></g></svg>
<svg style="left:1859px;top:614px" width="24" height="24" viewBox="0 0 24 24"><g transform="translate(12 12)"><path d="M-9-8 H-2 L0-6 H9 V8 H-9Z" fill="#f0c040"/><path d="M-9-4 H9 V8 H-9Z" fill="#f8d860"/><path d="M-4 0 H4 V8 H2 V3 H-2 V8 H-4Z" fill="#2a7ad8"/></g></svg>
<svg style="left:1888px;top:614px" width="24" height="24" viewBox="0 0 24 24"><g transform="translate(12 12)"><circle cx="3" cy="-3" r="6" fill="#3aa0e8"/><rect x="-9" y="-2" width="11" height="8" fill="#5ab8f0" stroke="#ccc" stroke-width="1"/></g></svg>
<svg style="left:1801px;top:642px" width="24" height="24" viewBox="0 0 24 24"><g transform="translate(12 12)"><rect x="-9" y="-7" width="18" height="14" fill="#4aa8e8" stroke="#2a78b8" stroke-width="1"/><circle cx="-3" cy="0" r="3.5" fill="#f0a020"/><rect x="2" y="-3" width="5" height="6" fill="#fff"/></g></svg>
<svg style="left:1830px;top:642px" width="24" height="24" viewBox="0 0 24 24"><g transform="translate(12 12)"><path d="M-6-8 H6 L5 9 H-5Z" fill="#e8e8e8" stroke="#aaa" stroke-width="1"/><circle cx="0" cy="1" r="3" fill="none" stroke="#3a8ad8" stroke-width="1.5"/></g></svg>
<svg style="left:1859px;top:642px" width="24" height="24" viewBox="0 0 24 24"><g transform="translate(12 12)"><rect x="-9" y="-7" width="18" height="14" fill="#4aa8e8" stroke="#2a78b8" stroke-width="1"/><circle cx="-3" cy="0" r="3.5" fill="#f0a020"/><rect x="2" y="-3" width="5" height="6" fill="#fff"/></g></svg>
<svg style="left:1888px;top:642px" width="24" height="24" viewBox="0 0 24 24"><g transform="translate(12 12)"><circle r="9" fill="#c01010"/><circle r="6" fill="#222"/><circle cx="4" cy="-4" r="3.5" fill="#f08040"/></g></svg>
<svg style="left:1801px;top:670px" width="24" height="24" viewBox="0 0 24 24"><g transform="translate(12 12)"><path d="M-7-9 H4 L7-6 V9 H-7Z" fill="#f4f4f4" stroke="#777" stroke-width=".8"/><path d="M-5-5 H5 M-5-2 H5 M-5 1 H5 M-5 4 H5 M-5 7 H5" stroke="#aaa" stroke-width=".8"/></g></svg>
<svg style="left:1830px;top:670px" width="24" height="24" viewBox="0 0 24 24"><g transform="translate(12 12)"><g transform="translate(-9 -9) scale(.7)"><path d="M4 2 L9 0 H17 L22 2 L25 6 L23 16 L13 26 L3 16 L1 6Z" fill="#f04a20"/><path d="M8 8 L13 10 L18 8 L20 12 L16 17 L13 20 L10 17 L6 12Z" fill="#fff"/><path d="M11 14 H15 L13 16Z" fill="#f04a20"/></g></g></svg>
<svg style="left:1859px;top:670px" width="24" height="24" viewBox="0 0 24 24"><g transform="translate(12 12)"><path d="M-9-3 L0-9 L9-3 V8 H-9Z" fill="#eee" stroke="#999" stroke-width="1"/><path d="M-9-3 L0 3 L9-3" fill="none" stroke="#999"/><circle cx="4" cy="3" r="3" fill="none" stroke="#d0a030" stroke-width="2"/></g></svg>
<svg style="left:1888px;top:670px" width="24" height="24" viewBox="0 0 24 24"><g transform="translate(12 12)"><path d="M-7-9 H4 L7-6 V9 H-7Z" fill="#f4f4f4" stroke="#777" stroke-width=".8"/><path d="M-5-5 H5 M-5-2 H5 M-5 1 H5 M-5 4 H5 M-5 7 H5" stroke="#aaa" stroke-width=".8"/></g></svg>
<svg style="left:1801px;top:698px" width="24" height="24" viewBox="0 0 24 24"><g transform="translate(12 12)"><rect x="-7" y="-9" width="16" height="10" fill="#eee" stroke="#333" stroke-width="1"/><rect x="-9" y="0" width="12" height="9" fill="#c8c840" stroke="#333" stroke-width="1"/></g></svg>
<svg style="left:1830px;top:698px" width="24" height="24" viewBox="0 0 24 24"><g transform="translate(12 12)"><path d="M-7-9 H4 L7-6 V9 H-7Z" fill="#f4f4f4" stroke="#777" stroke-width=".8"/><path d="M-5-5 H5 M-5-2 H5 M-5 1 H5 M-5 4 H5 M-5 7 H5" stroke="#aaa" stroke-width=".8"/></g></svg>
<svg style="left:1859px;top:698px" width="24" height="24" viewBox="0 0 24 24"><g transform="translate(12 12)"><g transform="translate(-9 -9) scale(.7)"><path d="M4 2 L9 0 H17 L22 2 L25 6 L23 16 L13 26 L3 16 L1 6Z" fill="#f04a20"/><path d="M8 8 L13 10 L18 8 L20 12 L16 17 L13 20 L10 17 L6 12Z" fill="#fff"/><path d="M11 14 H15 L13 16Z" fill="#f04a20"/></g></g></svg>
<svg style="left:1888px;top:698px" width="24" height="24" viewBox="0 0 24 24"><g transform="translate(12 12)"><rect x="-9" y="-7" width="18" height="14" fill="#f0f0f0" stroke="#999" stroke-width="1"/><rect x="-3" y="-3" width="7" height="8" fill="#1a6ad8"/></g></svg>
<svg style="left:1801px;top:726px" width="24" height="24" viewBox="0 0 24 24"><g transform="translate(12 12)"><g transform="translate(-9 -9) scale(.7)"><path d="M4 2 L9 0 H17 L22 2 L25 6 L23 16 L13 26 L3 16 L1 6Z" fill="#f04a20"/><path d="M8 8 L13 10 L18 8 L20 12 L16 17 L13 20 L10 17 L6 12Z" fill="#fff"/><path d="M11 14 H15 L13 16Z" fill="#f04a20"/></g></g></svg>
<svg style="left:1830px;top:726px" width="24" height="24" viewBox="0 0 24 24"><g transform="translate(12 12)"><circle r="9" fill="#1a8ad8"/><path d="M-6 4 C-6-6 8-6 8 1 C4-2 -2 0 2 5 C-1 6 -4 6 -6 4Z" fill="#40d080"/></g></svg>
<svg style="left:1859px;top:726px" width="24" height="24" viewBox="0 0 24 24"><g transform="translate(12 12)"><path d="M-7-9 H4 L7-6 V9 H-7Z" fill="#f4f4f4" stroke="#777" stroke-width=".8"/><path d="M-5-5 H5 M-5-2 H5 M-5 1 H5 M-5 4 H5 M-5 7 H5" stroke="#aaa" stroke-width=".8"/></g></svg>
<svg style="left:1888px;top:726px" width="24" height="24" viewBox="0 0 24 24"><g transform="translate(12 12)"><path d="M-7-9 H4 L7-6 V9 H-7Z" fill="#f4f4f4" stroke="#777" stroke-width=".8"/><path d="M-5-5 H5 M-5-2 H5 M-5 1 H5 M-5 4 H5 M-5 7 H5" stroke="#aaa" stroke-width=".8"/></g></svg>
<svg style="left:1801px;top:754px" width="24" height="24" viewBox="0 0 24 24"><g transform="translate(12 12)"><path d="M-7-9 H4 L7-6 V9 H-7Z" fill="#f4f4f4" stroke="#777" stroke-width=".8"/><path d="M-5-5 H5 M-5-2 H5 M-5 1 H5 M-5 4 H5 M-5 7 H5" stroke="#aaa" stroke-width=".8"/></g></svg>
<svg style="left:1830px;top:754px" width="24" height="24" viewBox="0 0 24 24"><g transform="translate(12 12)"><path d="M-7-9 H4 L7-6 V9 H-7Z" fill="#f4f4f4" stroke="#777" stroke-width=".8"/><path d="M-5-5 H5 M-5-2 H5 M-5 1 H5 M-5 4 H5 M-5 7 H5" stroke="#aaa" stroke-width=".8"/></g></svg>
<svg style="left:1859px;top:754px" width="24" height="24" viewBox="0 0 24 24"><g transform="translate(12 12)"><path d="M-7-9 H4 L7-6 V9 H-7Z" fill="#f4f4f4" stroke="#777" stroke-width=".8"/><path d="M-5-5 H5 M-5-2 H5 M-5 1 H5 M-5 4 H5 M-5 7 H5" stroke="#aaa" stroke-width=".8"/></g></svg>
<svg style="left:1888px;top:754px" width="24" height="24" viewBox="0 0 24 24"><g transform="translate(12 12)"><path d="M-7-9 H4 L7-6 V9 H-7Z" fill="#f4f4f4" stroke="#777" stroke-width=".8"/><path d="M-5-5 H5 M-5-2 H5 M-5 1 H5 M-5 4 H5 M-5 7 H5" stroke="#aaa" stroke-width=".8"/></g></svg>
<svg style="left:1801px;top:782px" width="24" height="24" viewBox="0 0 24 24"><g transform="translate(12 12)"><path d="M-7-9 H0 L2-7 H7 V9 H-7Z" fill="#f0d070"/><path d="M-7-5 H7 V9 H-7Z" fill="#f8dc80"/></g></svg>
<svg style="left:1830px;top:782px" width="24" height="24" viewBox="0 0 24 24"><g transform="translate(12 12)"><path d="M-7-9 H4 L7-6 V9 H-7Z" fill="#f4f4f4" stroke="#777" stroke-width=".8"/><path d="M-5-5 H5 M-5-2 H5 M-5 1 H5 M-5 4 H5 M-5 7 H5" stroke="#aaa" stroke-width=".8"/></g></svg>
<svg style="left:1859px;top:782px" width="24" height="24" viewBox="0 0 24 24"><g transform="translate(12 12)"><g transform="translate(-9 -9) scale(.7)"><path d="M4 2 L9 0 H17 L22 2 L25 6 L23 16 L13 26 L3 16 L1 6Z" fill="#f04a20"/><path d="M8 8 L13 10 L18 8 L20 12 L16 17 L13 20 L10 17 L6 12Z" fill="#fff"/><path d="M11 14 H15 L13 16Z" fill="#f04a20"/></g></g></svg>
<svg style="left:1888px;top:782px" width="24" height="24" viewBox="0 0 24 24"><g transform="translate(12 12)"><path d="M-7-9 H0 L2-7 H7 V9 H-7Z" fill="#f0d070"/><path d="M-7-5 H7 V9 H-7Z" fill="#f8dc80"/></g></svg>
<svg style="left:1812px;top:862px" width="14" height="18" viewBox="0 0 14 18"><path d="M10 2 L3 9 L10 16" fill="none" stroke="#fff" stroke-width="1.3"/></svg>
<svg style="left:1841px;top:862px" width="18" height="18" viewBox="0 0 18 18"><rect x="2" y="5" width="9" height="9" rx="2" fill="none" stroke="#fff" stroke-width="1.2"/><path d="M11 8 L15 6 V13 L11 11" fill="none" stroke="#fff" stroke-width="1.2"/><path d="M3 3 A8 8 0 0 1 12 3 M3 16 A8 8 0 0 0 12 16" fill="none" stroke="#fff" stroke-width="1"/></svg>
<svg style="left:1869px;top:862px" width="22" height="18" viewBox="0 0 22 18"><rect x="6" y="3" width="14" height="10" fill="none" stroke="#fff" stroke-width="1.2"/><path d="M13 13 V16 M9 16 H17" stroke="#fff" stroke-width="1.2"/><rect x="2" y="2" width="5" height="4" fill="none" stroke="#fff" stroke-width="1"/><path d="M4 6 V16" stroke="#fff" stroke-width="1"/></svg>
<svg style="left:1898px;top:862px" width="22" height="18" viewBox="0 0 22 18"><path d="M2 7 H5 L9 3 V15 L5 11 H2Z" fill="none" stroke="#fff" stroke-width="1.2"/><path d="M12 6 A4 4 0 0 1 12 12 M15 4 A7 7 0 0 1 15 14" fill="none" stroke="#fff" stroke-width="1.2"/></svg>
<div class="t" style="left:1843.83px;top:890.15px;font-size:14px;color:#f0ecf4;">POR</div>
<div class="t" style="left:1841.49px;top:912.15px;font-size:14px;color:#f0ecf4;">PTB2</div>
<div class="t" style="left:1832.93px;top:950.15px;font-size:14px;color:#f0ecf4;">5:05 PM</div>
<div class="t" style="left:1829.82px;top:972.15px;font-size:14px;color:#f0ecf4;">Thursday</div>
<div class="t" style="left:1831.75px;top:994.15px;font-size:14px;color:#f0ecf4;">8/7/2025</div>
<svg style="left:1849px;top:1032px" width="22" height="22" viewBox="0 0 22 22"><path d="M2 2 H19 V15 H13 L10.5 18 L8 15 H2Z" fill="none" stroke="#fff" stroke-width="1.3"/></svg>
<div class="a" style="left:1800px;top:1074px;width:120px;height:1px;background:#8a7aa8;"></div>
</body></html>
